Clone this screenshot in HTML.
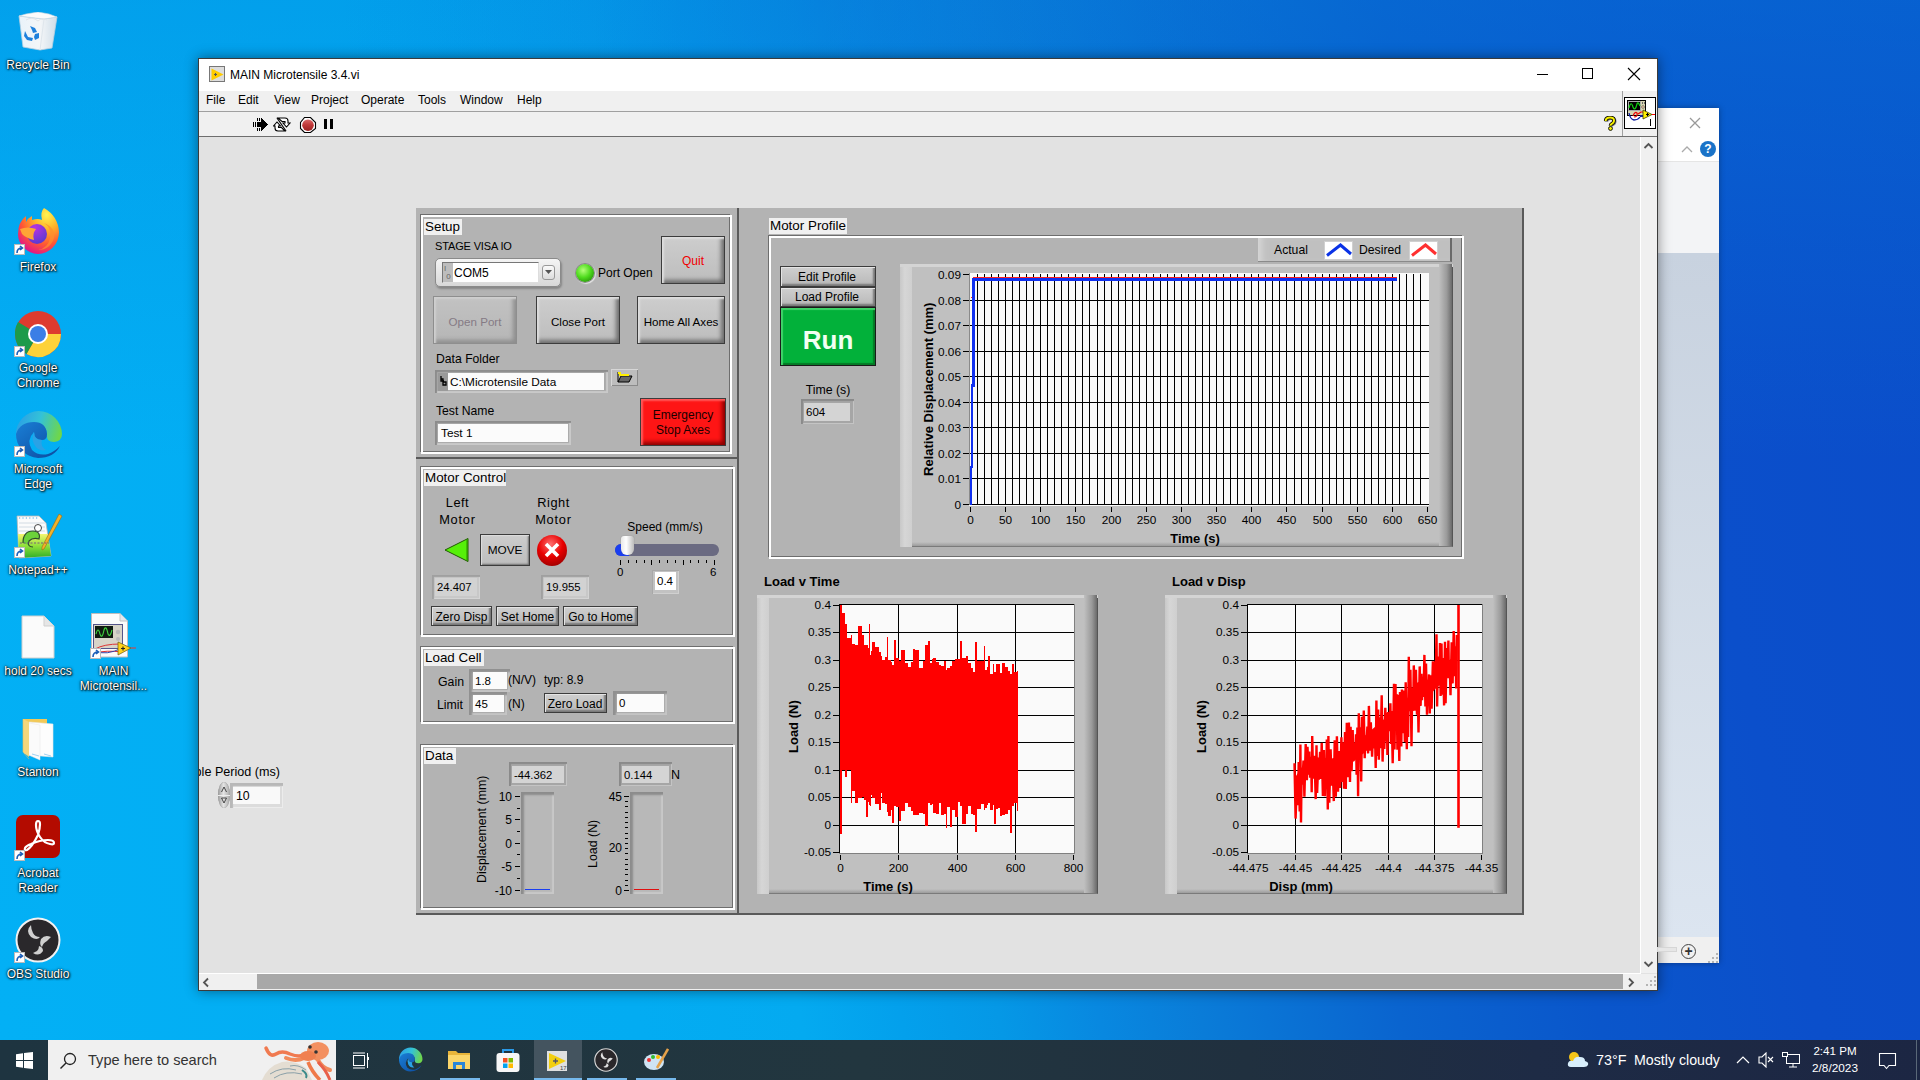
<!DOCTYPE html>
<html><head><meta charset="utf-8"><style>
*{margin:0;padding:0;box-sizing:border-box}
html,body{width:1920px;height:1080px;overflow:hidden}
body{position:relative;font-family:"Liberation Sans",sans-serif;background:#0a48c4}
.a{position:absolute}
.t{white-space:nowrap;line-height:1}
.di{position:absolute;color:#fff;font-size:12px;text-align:center;text-shadow:0 0 1px #000,1px 1px 2px #000,0 0 3px rgba(0,0,0,.8);line-height:15px;width:84px}
.btn{position:absolute;border:1px solid #3c3c3c;background:linear-gradient(#cdcdcd,#bdbdbd);box-shadow:inset 3px 3px 2px -1px #dedede,inset -4px -4px 4px -1px #6c6c6c}
.sbtn{position:absolute;border:1px solid #3c3c3c;background:linear-gradient(#cfcfcf,#b8b8b8);box-shadow:inset 1px 1px 0 #e4e4e4,inset -2px -2px 2px #777}
.fld{position:absolute;background:#a9a9a9;box-shadow:inset 2px 2px 1px #8c8c8c,inset -2px -2px 1px #c9c9c9}
.ind{position:absolute;background:#d6d6d6}
.lbl{position:absolute;background:#f0f0f0;font-size:13.4px;line-height:16px;color:#000;padding-left:1px;white-space:nowrap}
.etch{position:absolute;border:1px solid #6e6e6e;box-shadow:1px 1px 0 1px #fff, inset 1px 1px 0 1px #fff}
</style></head><body>
<div class="a" style="left:0;top:0;width:1920px;height:1040px;background:radial-gradient(ellipse 480px 330px at 820px 0px,rgba(10,108,214,.35),rgba(10,108,214,0) 100%),linear-gradient(180deg,rgba(0,135,222,.35) 0px,rgba(0,135,222,0) 460px),linear-gradient(78deg,#03b0f5 0%,#03acf2 30%,#04aaf0 37.6%,#03a0ec 42.3%,#0598e6 46.9%,#0888e0 51.6%,#0a7cd8 56.3%,#0a64cf 65.6%,#0a56cb 74.9%,#0b4fcb 85%,#0b4cc9 100%)"></div>
<svg class="a" style="left:16px;top:12px" width="44" height="40"><defs><linearGradient id="rb" x1="0" x2="1"><stop offset="0" stop-color="#e9f3fa"/><stop offset="0.55" stop-color="#f4f6f8"/><stop offset="1" stop-color="#cfdde8"/></linearGradient></defs><path d="M3 4 L28 7 L41 5 L36 36 L24 38 L7 35 Z" fill="url(#rb)" stroke="#b9cfdf" stroke-width="0.8"/><path d="M3 4 L28 7 L41 5 L33 2 L22 0 L10 2Z" fill="#fbfbfb" stroke="#c8d6e0" stroke-width="0.6"/><path d="M28 7 L24 38" stroke="#dfe6ec" stroke-width="1"/><path d="M10 8 Q16 4 22 9 Q26 5 31 8" stroke="#e0e4e8" fill="none"/><g transform="translate(15,21)" fill="#1e80dc"><path d="M-1 -7 L4 -5 L6 -1 L2 0 L1 -3 Z"/><path d="M-6 -2 L-3 4 L2 5 L1 8 L-4 7 L-7 3Z"/><path d="M4 1 L8 0 L8 5 L4 7 L3 4Z"/></g></svg>
<div class="di" style="left:-4px;top:58px">Recycle Bin</div>
<svg class="a" style="left:14px;top:208px" width="48" height="48"><defs><radialGradient id="ff" cx="0.7" cy="0.15" r="0.9"><stop offset="0" stop-color="#fff44f"/><stop offset="0.35" stop-color="#ffb32a"/><stop offset="0.7" stop-color="#ff5a32"/><stop offset="1" stop-color="#e31587"/></radialGradient><radialGradient id="fp" cx="0.4" cy="0.2" r="0.8"><stop offset="0" stop-color="#b833e1"/><stop offset="1" stop-color="#5b3ad0"/></radialGradient></defs><path d="M24 46 A21 20 0 0 1 4 26 Q4 14 12 8 L12 14 Q14 10 18 8 L18 12 Q24 10 28 12 Q26 4 30 0 Q44 8 45 24 A21 22 0 0 1 24 46Z" fill="url(#ff)"/><circle cx="23" cy="26" r="10" fill="url(#fp)"/><path d="M6 21 Q14 18 22 21 Q18 26 20 32 Q12 30 8 26Z" fill="#ffa436"/><path d="M30 15 Q38 20 36 30 Q34 40 24 42 Q36 42 40 30 Q42 20 30 15Z" fill="#ff8f2e" opacity="0.7"/></svg>
<div class="a" style="left:14px;top:244px;width:11px;height:11px;background:#fff;border:1px solid #bbb"><svg width="9" height="9" style="position:absolute;left:0;top:0"><path d="M2 8 Q2 3 7 3 M5 1 L7.5 3 L5 5" stroke="#1c5fb8" stroke-width="1.6" fill="none"/></svg></div>
<div class="di" style="left:-4px;top:260px">Firefox</div>
<svg class="a" style="left:14px;top:310px" width="48" height="48"><circle cx="24" cy="24" r="23" fill="#de3b2f"/><path d="M24 24 L47 24 A23 23 0 0 1 12.5 44Z" fill="#fdd23a"/><path d="M24 24 L12.5 44 A23 23 0 0 1 1 24 L1 22 A23 23 0 0 1 4 12Z" fill="#1d9a4a"/><circle cx="24" cy="24" r="10" fill="#fff"/><circle cx="24" cy="24" r="8" fill="#3b7ee6"/></svg>
<div class="a" style="left:14px;top:346px;width:11px;height:11px;background:#fff;border:1px solid #bbb"><svg width="9" height="9" style="position:absolute;left:0;top:0"><path d="M2 8 Q2 3 7 3 M5 1 L7.5 3 L5 5" stroke="#1c5fb8" stroke-width="1.6" fill="none"/></svg></div>
<div class="di" style="left:-4px;top:361px">Google</div>
<div class="di" style="left:-4px;top:376px">Chrome</div>
<svg class="a" style="left:14px;top:410px" width="49" height="49"><defs><linearGradient id="eg" x1="0" y1="0.3" x2="1" y2="0.5"><stop offset="0" stop-color="#2b9ee6"/><stop offset="0.5" stop-color="#33c2d8"/><stop offset="1" stop-color="#6fd64a"/></linearGradient><linearGradient id="ed" x1="0" y1="0" x2="1" y2="1"><stop offset="0" stop-color="#1a7fd6"/><stop offset="1" stop-color="#0c4a9e"/></linearGradient></defs><path d="M24.5 1 A23.5 23.5 0 0 1 48 24 Q48 31 40 32 Q32 32 33 25 Q33 15 24 14 Q10 14 4 26 Q2 30 2 24 A23 23 0 0 1 24.5 1Z" fill="url(#eg)"/><path d="M2 24 Q6 12 20 12 Q32 12 33 24 Q33 30 28 30 Q20 30 20 22 Q12 30 18 40 Q24 46 34 44 Q40 42 46 36 Q40 48 24 48 A23.5 23.5 0 0 1 2 24Z" fill="url(#ed)"/><path d="M20 22 Q20 30 28 30 Q26 36 32 40 Q24 42 20 34 Q17 28 20 22Z" fill="#2aa2e6"/></svg>
<div class="a" style="left:14px;top:446px;width:11px;height:11px;background:#fff;border:1px solid #bbb"><svg width="9" height="9" style="position:absolute;left:0;top:0"><path d="M2 8 Q2 3 7 3 M5 1 L7.5 3 L5 5" stroke="#1c5fb8" stroke-width="1.6" fill="none"/></svg></div>
<div class="di" style="left:-4px;top:462px">Microsoft</div>
<div class="di" style="left:-4px;top:477px">Edge</div>
<svg class="a" style="left:15px;top:513px" width="48" height="46"><defs><linearGradient id="np" x1="0" y1="0" x2="0" y2="1"><stop offset="0" stop-color="#f6f570"/><stop offset="0.5" stop-color="#8fe03a"/><stop offset="1" stop-color="#2fae2a"/></linearGradient></defs><path d="M2 3 L24 3 L31 10 L36 43 L4 45Z" fill="#fbfbfb" stroke="#b8b8b8" stroke-width="0.8"/><path d="M4 5H23" stroke="#4aa8e8" stroke-dasharray="1.2 2.2" stroke-width="1.2"/><path d="M4 10H30M4 14H30M4 18H30" stroke="#c9d4de" stroke-width="0.8"/><path d="M3 21 L33 21 L36 43 L4 45Z" fill="url(#np)"/><path d="M8 30 Q8 18 18 18 Q26 18 24 26 Q18 24 14 28 Q12 34 18 34" stroke="#2d4d2d" stroke-width="1.2" fill="#6cd23a"/><circle cx="23" cy="15" r="3.5" fill="#fff" stroke="#333" stroke-width="0.9"/><path d="M44 1 L47 3 L29 36 L27 37 L27 34Z" fill="#f2b22a" stroke="#9a6a10" stroke-width="0.6"/><path d="M5 30H34" stroke="#6a3a8a" stroke-width="0.8" stroke-dasharray="2 1.5"/></svg>
<div class="a" style="left:14px;top:547px;width:11px;height:11px;background:#fff;border:1px solid #bbb"><svg width="9" height="9" style="position:absolute;left:0;top:0"><path d="M2 8 Q2 3 7 3 M5 1 L7.5 3 L5 5" stroke="#1c5fb8" stroke-width="1.6" fill="none"/></svg></div>
<div class="di" style="left:-4px;top:563px">Notepad++</div>
<svg class="a" style="left:20px;top:614px" width="36" height="46"><path d="M2 2 L24 2 L34 12 L34 44 L2 44Z" fill="#fbfbfb" stroke="#cfcfcf"/><path d="M24 2 L24 12 L34 12" fill="#e6e6e6" stroke="#cfcfcf"/></svg>
<div class="di" style="left:-4px;top:664px">hold 20 secs</div>
<svg class="a" style="left:90px;top:612px" width="46" height="46"><path d="M1.5 1.5 L30 1.5 L37.5 9 L37.5 45 L1.5 45Z" fill="#fbfbfb" stroke="#bdbdbd"/><path d="M30 1.5V9H37.5" fill="#e4e8ee" stroke="#c4c4c4"/><rect x="3.5" y="12.5" width="29" height="24" fill="#d8d4c8" stroke="#55558a"/><rect x="5" y="14" width="18" height="12" fill="#101a10"/><path d="M6 22 Q8 14 10 22 Q12 28 14 18 Q16 12 18 22 Q20 26 22 18" stroke="#3fd23f" fill="none" stroke-width="1.1"/><circle cx="28" cy="20" r="2.2" fill="#bbb"/><circle cx="28" cy="27" r="2" fill="#bbb"/><path d="M5 37 Q14 32 30 32 M5 41 Q16 38 32 40" stroke="#d33" fill="none" stroke-width="1"/><path d="M5 39 Q16 44 32 36" stroke="#3344aa" fill="none" stroke-width="1"/><path d="M28 30 L41 36 L28 43Z" fill="#ffd21a" stroke="#6a5a10" stroke-width="0.7"/><path d="M31 36.5H35M33 34.5V38.5" stroke="#222" stroke-width="1.1"/><path d="M41 36H46" stroke="#e33" stroke-width="1"/></svg>
<div class="a" style="left:90px;top:648px;width:11px;height:11px;background:#fff;border:1px solid #bbb"><svg width="9" height="9" style="position:absolute;left:0;top:0"><path d="M2 8 Q2 3 7 3 M5 1 L7.5 3 L5 5" stroke="#1c5fb8" stroke-width="1.6" fill="none"/></svg></div>
<div class="di" style="left:71.5px;top:664px">MAIN</div>
<div class="di" style="left:71.5px;top:679px">Microtensil...</div>
<svg class="a" style="left:20px;top:716px" width="38" height="46"><path d="M3 3 L27 3 L27 30 L3 30Z" fill="#f2c958"/><path d="M9 6 L33 8 L33 41 L9 39Z" fill="#fdfdfd" stroke="#e8e8e8" stroke-width="0.6"/><path d="M4 6 L20 9 L20 44 L4 37Z" fill="#fbfbfb" stroke="#e6e6e6" stroke-width="0.5"/><path d="M3 3 L9 6 L9 41 L3 36Z" fill="#f6d77c"/><path d="M3 3 L3 36 L9 43" stroke="#e6c060" fill="none" stroke-width="0.6"/><path d="M12 38 L19 40 M24 38 L31 40" stroke="#8ac6ee" stroke-width="0.8"/></svg>
<div class="di" style="left:-4px;top:765px">Stanton</div>
<svg class="a" style="left:16px;top:815px" width="44" height="44"><rect x="0" y="0" width="44" height="43" rx="7" fill="#b30b00"/><path d="M9 33 Q8 36 11 35 Q16 32 22 20 Q24 14 24 9 Q24 6 22 6 Q20 6 20 10 Q20 16 24 22 Q28 28 34 29 Q38 30 38 28 Q38 25 32 25 Q24 25 15 29 Q10 31 9 33Z" fill="none" stroke="#fff" stroke-width="2.2"/></svg>
<div class="a" style="left:14px;top:850px;width:11px;height:11px;background:#fff;border:1px solid #bbb"><svg width="9" height="9" style="position:absolute;left:0;top:0"><path d="M2 8 Q2 3 7 3 M5 1 L7.5 3 L5 5" stroke="#1c5fb8" stroke-width="1.6" fill="none"/></svg></div>
<div class="di" style="left:-4px;top:866px">Acrobat</div>
<div class="di" style="left:-4px;top:881px">Reader</div>
<svg class="a" style="left:15px;top:917px" width="46" height="46"><circle cx="23" cy="23" r="21.5" fill="#2a282b" stroke="#f2f2f2" stroke-width="2"/><g fill="#d0d0d0"><path d="M16 8 Q10 14 16 20 Q22 24 25 20 Q20 20 18 16 Q16 12 16 8Z"/><path d="M36 20 Q30 17 26 22 Q24 28 27 30 Q28 26 32 24 Q34 22 36 20Z"/><path d="M18 36 Q24 40 28 34 Q28 30 24 29 Q24 32 22 34 Q20 35 18 36Z"/></g></svg>
<div class="a" style="left:14px;top:952px;width:11px;height:11px;background:#fff;border:1px solid #bbb"><svg width="9" height="9" style="position:absolute;left:0;top:0"><path d="M2 8 Q2 3 7 3 M5 1 L7.5 3 L5 5" stroke="#1c5fb8" stroke-width="1.6" fill="none"/></svg></div>
<div class="di" style="left:-4px;top:967px">OBS Studio</div>
<div class="a" style="left:1657px;top:108px;width:62px;height:855px;background:#fff;box-shadow:0 0 6px rgba(0,0,0,.35)"></div>
<div class="a" style="left:1657px;top:161px;width:62px;height:1px;background:#e5e5e5"></div>
<div class="a" style="left:1657px;top:162px;width:62px;height:91px;background:#f3f4f6"></div>
<div class="a" style="left:1657px;top:253px;width:62px;height:684px;background:linear-gradient(#c8d2df,#dce5f0)"></div>
<div class="a" style="left:1657px;top:937px;width:62px;height:26px;background:#f0f0f0"></div>
<svg class="a" style="left:1688px;top:116px" width="14" height="14"><path d="M2 2L12 12M12 2L2 12" stroke="#999" stroke-width="1.3"/></svg>
<svg class="a" style="left:1680px;top:144px" width="14" height="10"><path d="M2 8L7 3L12 8" stroke="#aaa" stroke-width="1.3" fill="none"/></svg>
<div class="a" style="left:1700px;top:141px;width:16px;height:16px;border-radius:50%;background:#1a73c8;color:#fff;font-size:12px;font-weight:700;text-align:center;line-height:16px">?</div>
<div class="a" style="left:1681px;top:944px;width:15px;height:15px;border-radius:50%;border:1px solid #444;color:#333;font-size:14px;font-weight:700;text-align:center;line-height:13px">+</div>
<div class="a" style="left:198px;top:58px;width:1460px;height:933px;background:#e2e2e2;border:1px solid #3b3b3b;box-shadow:0 0 12px rgba(0,0,0,.45)"></div>
<div class="a" style="left:199px;top:59px;width:1458px;height:32px;background:#fff"></div>
<div class="a" style="left:209px;top:66px;width:16px;height:16px;border:1px solid #777;background:#ddd"></div>
<svg class="a" style="left:210px;top:67px" width="15" height="15"><path d="M1.5 1.5L13.5 7.5L1.5 13.5Z" fill="#ffcc00"/><path d="M4 7.5H7M5.5 6V9" stroke="#555" stroke-width="1"/></svg>
<div class="a t" style="left:230px;top:69px;font-size:12px;color:#000;font-weight:400;">MAIN Microtensile 3.4.vi</div>
<div class="a" style="left:1537px;top:74px;width:11px;height:1px;background:#000"></div>
<div class="a" style="left:1582px;top:68px;width:11px;height:11px;border:1px solid #000"></div>
<svg class="a" style="left:1627px;top:67px" width="14" height="14"><path d="M1 1L13 13M13 1L1 13" stroke="#000" stroke-width="1.1"/></svg>
<div class="a" style="left:199px;top:91px;width:1458px;height:20px;background:#f0f0f0"></div>
<div class="a" style="left:199px;top:111px;width:1458px;height:1px;background:#a0a0a0"></div>
<div class="a t" style="left:206px;top:94px;font-size:12px;color:#000;font-weight:400;">File</div>
<div class="a t" style="left:238px;top:94px;font-size:12px;color:#000;font-weight:400;">Edit</div>
<div class="a t" style="left:274px;top:94px;font-size:12px;color:#000;font-weight:400;">View</div>
<div class="a t" style="left:311px;top:94px;font-size:12px;color:#000;font-weight:400;">Project</div>
<div class="a t" style="left:361px;top:94px;font-size:12px;color:#000;font-weight:400;">Operate</div>
<div class="a t" style="left:418px;top:94px;font-size:12px;color:#000;font-weight:400;">Tools</div>
<div class="a t" style="left:460px;top:94px;font-size:12px;color:#000;font-weight:400;">Window</div>
<div class="a t" style="left:517px;top:94px;font-size:12px;color:#000;font-weight:400;">Help</div>
<div class="a" style="left:199px;top:112px;width:1423px;height:24px;background:#f0f0f0"></div>
<div class="a" style="left:199px;top:136px;width:1442px;height:1px;background:#6e6e6e"></div>
<div class="a" style="left:1622px;top:91px;width:1px;height:46px;background:#a0a0a0"></div>
<div class="a" style="left:1623px;top:91px;width:34px;height:46px;background:#f0f0f0"></div>
<div class="a" style="left:1622px;top:136px;width:35px;height:1px;background:#6e6e6e"></div>
<div class="a" style="left:1624px;top:97px;width:32px;height:32px;background:#fff;border:1px solid #000"></div>
<svg class="a" style="left:1624px;top:97px" width="33" height="33" shape-rendering="crispEdges"><rect x="3" y="3" width="19" height="16" fill="#000"/><rect x="4" y="4" width="17" height="14" fill="#d6d4b0"/><rect x="4" y="4" width="13" height="10" fill="#aaa"/><rect x="5" y="5" width="11" height="8" fill="#000"/><path d="M5 11 Q7 3 9 10 Q11 15 13 7 Q14 4 16 9" stroke="#10d010" stroke-width="1.2" fill="none" shape-rendering="auto"/><circle cx="19" cy="10" r="1.4" fill="#f0c8a0" stroke="#555" stroke-width="0.6" shape-rendering="auto"/><rect x="18" y="5" width="1" height="2" fill="#666"/><rect x="20" y="5" width="1" height="2" fill="#666"/><path d="M5 16 Q6 22 10 23 Q14 23 16 20" stroke="#1020a0" stroke-width="1.3" fill="none" shape-rendering="auto"/><path d="M9 19 Q11 14 13 16 Q14 20 10 20 M14 17 L17 15 L21 15" stroke="#f00000" stroke-width="1.2" fill="none" shape-rendering="auto"/><path d="M16 19H20" stroke="#1020a0" stroke-width="1.3"/><path d="M19 13L28 17.5L19 22Z" fill="#ffef00" stroke="#404000" stroke-width="0.8" shape-rendering="auto"/><path d="M22 17.5H25M23.5 16V19" stroke="#000" stroke-width="1.2"/><path d="M28 17.5H31" stroke="#f00"/><path d="M25.5 23.5 L26.5 22.5 V29" stroke="#000" stroke-width="1.3" fill="none"/></svg>
<svg class="a" style="left:250px;top:115px" width="20" height="18" shape-rendering="crispEdges"><path d="M7 7H11V3L18 9.5L11 16V12H7Z" fill="#000"/><rect x="7" y="3" width="1" height="3" fill="#000"/><rect x="9" y="3" width="1" height="3" fill="#000"/><rect x="7" y="13" width="1" height="3" fill="#000"/><rect x="9" y="13" width="1" height="3" fill="#000"/><rect x="3" y="7" width="1" height="5" fill="#000"/><rect x="5" y="7" width="1" height="5" fill="#000"/></svg>
<svg class="a" style="left:273px;top:117px" width="18" height="15"><path d="M5 1 H12 Q15 1 15 4 V6 H17 L13.5 10 L10 6 H12 V4.5 H9Z" fill="#fff" stroke="#000" stroke-width="1.1" stroke-linejoin="miter"/><path d="M12 14 H5 Q2 14 2 11 V9 H0.5 L4 5 L7.5 9 H5.5 V10.5 H8.5Z" fill="#fff" stroke="#000" stroke-width="1.1"/><path d="M4 1 L13 14" stroke="#000" stroke-width="1.2"/></svg>
<svg class="a" style="left:299px;top:116px" width="18" height="18"><path d="M5.5 1.5H11.5L16.5 6.5V12.5L11.5 16.5H5.5L1.5 12.5V6.5Z" fill="#fff" stroke="#000" stroke-width="1.1"/><defs><linearGradient id="ab" x1="0" y1="0" x2="0" y2="1"><stop offset="0" stop-color="#d86a6a"/><stop offset="0.45" stop-color="#c23a3a"/><stop offset="1" stop-color="#9a2222"/></linearGradient></defs><circle cx="9" cy="9.2" r="5.8" fill="url(#ab)"/></svg>
<div class="a" style="left:324px;top:119px;width:3px;height:10px;background:#000"></div>
<div class="a" style="left:330px;top:119px;width:3px;height:10px;background:#000"></div>
<svg class="a" style="left:1603px;top:116px" width="15" height="17" viewBox="0 0 17 19"><path d="M3 5.5 Q3 1.5 8 1.5 Q12.5 1.5 12.5 5 Q12.5 7.5 9.5 9 Q8.5 9.6 8.5 11" stroke="#000" stroke-width="4" fill="none" transform="translate(0.8,0.8)" opacity="0.5"/><path d="M3 5.5 Q3 1.5 8 1.5 Q12.5 1.5 12.5 5 Q12.5 7.5 9.5 9 Q8.5 9.6 8.5 11" stroke="#000" stroke-width="4" fill="none"/><path d="M3 5.5 Q3 1.5 8 1.5 Q12.5 1.5 12.5 5 Q12.5 7.5 9.5 9 Q8.5 9.6 8.5 11" stroke="#f6f000" stroke-width="2.2" fill="none"/><circle cx="8.5" cy="14" r="2.2" fill="#f6f000" stroke="#000" stroke-width="1"/></svg>
<div class="a" style="left:1641px;top:137px;width:16px;height:836px;background:#f0f0f0"></div>
<div class="a" style="left:1640px;top:137px;width:1px;height:837px;background:#fff"></div>
<svg class="a" style="left:1643px;top:141px" width="11" height="9"><path d="M1.5 7L5.5 3L9.5 7" stroke="#555" stroke-width="1.8" fill="none"/></svg>
<svg class="a" style="left:1643px;top:960px" width="11" height="9"><path d="M1.5 2L5.5 6L9.5 2" stroke="#555" stroke-width="1.8" fill="none"/></svg>
<div class="a" style="left:199px;top:973px;width:1442px;height:1px;background:#fff"></div>
<div class="a" style="left:199px;top:974px;width:1442px;height:16px;background:#f0f0f0"></div>
<div class="a" style="left:257px;top:974px;width:1366px;height:15px;background:#a8a8a8"></div>
<svg class="a" style="left:201px;top:977px" width="9" height="11"><path d="M7 1.5L3 5.5L7 9.5" stroke="#555" stroke-width="1.8" fill="none"/></svg>
<svg class="a" style="left:1627px;top:977px" width="9" height="11"><path d="M2 1.5L6 5.5L2 9.5" stroke="#555" stroke-width="1.8" fill="none"/></svg>
<div class="a" style="left:1641px;top:974px;width:16px;height:16px;background:#f0f0f0"></div>
<div class="a" style="left:1654px;top:976px;width:2px;height:2px;background:#b4b4b4"></div>
<div class="a" style="left:1650px;top:980px;width:2px;height:2px;background:#b4b4b4"></div>
<div class="a" style="left:1654px;top:980px;width:2px;height:2px;background:#b4b4b4"></div>
<div class="a" style="left:1646px;top:984px;width:2px;height:2px;background:#b4b4b4"></div>
<div class="a" style="left:1650px;top:984px;width:2px;height:2px;background:#b4b4b4"></div>
<div class="a" style="left:1654px;top:984px;width:2px;height:2px;background:#b4b4b4"></div>
<div class="a" style="left:1716px;top:953px;width:2px;height:2px;background:#b4b4b4"></div>
<div class="a" style="left:1712px;top:957px;width:2px;height:2px;background:#b4b4b4"></div>
<div class="a" style="left:1716px;top:957px;width:2px;height:2px;background:#b4b4b4"></div>
<div class="a" style="left:1708px;top:961px;width:2px;height:2px;background:#b4b4b4"></div>
<div class="a" style="left:1712px;top:961px;width:2px;height:2px;background:#b4b4b4"></div>
<div class="a" style="left:1716px;top:961px;width:2px;height:2px;background:#b4b4b4"></div>
<div class="a" style="left:1657px;top:947px;width:20px;height:5px;background:#e6e6e6;border:1px solid #d6d6d6"></div>
<div class="a" style="left:199px;top:760px;width:100px;height:22px;overflow:hidden"><div class="a t" style="left:-30.3px;top:6.3px;font-size:12.6px;color:#000">Sample Period (ms)</div></div>
<div class="a" style="left:218px;top:782px;width:12px;height:26px;border-radius:6px/13px;background:linear-gradient(90deg,#9c9c9c,#e4e4e4 45%,#a8a8a8);box-shadow:inset 0 0 1px #777"></div>
<div class="a" style="left:218px;top:795px;width:12px;height:1px;background:#ededed"></div>
<svg class="a" style="left:220px;top:785px" width="8" height="20"><path d="M1.5 7L4 2L6.5 7M1.5 13L4 18L6.5 13Z" stroke="#333" stroke-width="0.9" fill="none"/></svg>
<div class="a" style="left:230px;top:783px;width:53px;height:25px;background:#dcdcdc;box-shadow:inset 3px 3px 1px #b8b8b8,inset -1px -1px 0 #ececec"></div>
<div class="a" style="left:233px;top:787px;width:47px;height:17px;background:#f9f9f9"></div>
<div class="a t" style="left:236px;top:789.5px;font-size:12.3px;color:#000;font-weight:400;">10</div>
<div class="a" style="left:416px;top:208px;width:323px;height:251px;background:#b3b3b3;border-right:2px solid #5a5a5a;border-bottom:2px solid #5a5a5a"></div>
<div class="a" style="left:416px;top:459px;width:323px;height:456px;background:#b3b3b3;border-right:2px solid #5a5a5a;border-bottom:2px solid #5a5a5a"></div>
<div class="a" style="left:738px;top:208px;width:786px;height:707px;background:#b3b3b3;border-right:2px solid #5a5a5a;border-bottom:2px solid #5a5a5a"></div>
<div class="a" style="left:738px;top:208px;width:1px;height:707px;background:#5a5a5a"></div>
<div class="a" style="left:420px;top:214px;width:310px;height:238px;border-left:1px solid #6e6e6e;border-top:1px solid #6e6e6e"></div>
<div class="a" style="left:421px;top:215px;width:311px;height:239px;border-left:2px solid #fff;border-top:2px solid #fff;border-right:2px solid #fff;border-bottom:2px solid #fff"></div>
<div class="a" style="left:423px;top:217px;width:307px;height:235px;border-right:1px solid #6e6e6e;border-bottom:1px solid #6e6e6e"></div>
<div class="a" style="left:420px;top:466px;width:313px;height:169px;border-left:1px solid #6e6e6e;border-top:1px solid #6e6e6e"></div>
<div class="a" style="left:421px;top:467px;width:314px;height:170px;border-left:2px solid #fff;border-top:2px solid #fff;border-right:2px solid #fff;border-bottom:2px solid #fff"></div>
<div class="a" style="left:423px;top:469px;width:310px;height:166px;border-right:1px solid #6e6e6e;border-bottom:1px solid #6e6e6e"></div>
<div class="a" style="left:420px;top:646px;width:313px;height:76px;border-left:1px solid #6e6e6e;border-top:1px solid #6e6e6e"></div>
<div class="a" style="left:421px;top:647px;width:314px;height:77px;border-left:2px solid #fff;border-top:2px solid #fff;border-right:2px solid #fff;border-bottom:2px solid #fff"></div>
<div class="a" style="left:423px;top:649px;width:310px;height:73px;border-right:1px solid #6e6e6e;border-bottom:1px solid #6e6e6e"></div>
<div class="a" style="left:420px;top:744px;width:313px;height:164px;border-left:1px solid #6e6e6e;border-top:1px solid #6e6e6e"></div>
<div class="a" style="left:421px;top:745px;width:314px;height:165px;border-left:2px solid #fff;border-top:2px solid #fff;border-right:2px solid #fff;border-bottom:2px solid #fff"></div>
<div class="a" style="left:423px;top:747px;width:310px;height:161px;border-right:1px solid #6e6e6e;border-bottom:1px solid #6e6e6e"></div>
<div class="a" style="left:768px;top:235px;width:694px;height:322px;border-left:1px solid #6e6e6e;border-top:1px solid #6e6e6e"></div>
<div class="a" style="left:769px;top:236px;width:695px;height:323px;border-left:2px solid #fff;border-top:2px solid #fff;border-right:2px solid #fff;border-bottom:2px solid #fff"></div>
<div class="a" style="left:771px;top:238px;width:691px;height:319px;border-right:1px solid #6e6e6e;border-bottom:1px solid #6e6e6e"></div>
<div class="lbl" style="left:424px;top:219px;width:38px;height:16px">Setup</div>
<div class="lbl" style="left:424px;top:470px;width:82px;height:16px">Motor Control</div>
<div class="lbl" style="left:424px;top:650px;width:60px;height:16px">Load Cell</div>
<div class="lbl" style="left:424px;top:748px;width:32px;height:16px">Data</div>
<div class="lbl" style="left:769px;top:218px;width:78px;height:16px">Motor Profile</div>
<div class="a t" style="left:435px;top:241px;font-size:11px;color:#000;font-weight:400;letter-spacing:-0.15px">STAGE VISA IO</div>
<div class="a" style="left:435px;top:258px;width:126px;height:29px;border-radius:5px;border:1px solid #8a8a8a;background:linear-gradient(#f4f4f4,#d8d8d8);box-shadow:1px 2px 2px rgba(0,0,0,.25)"></div>
<div class="a" style="left:442px;top:262px;width:97px;height:21px;background:#fff;border:1px solid #777;border-bottom-color:#ddd;border-right-color:#ddd"></div>
<div class="a" style="left:443px;top:263px;width:10px;height:19px;background:#bdbdbd"></div>
<div class="a t" style="left:444px;top:265px;font-size:8px;color:#666;line-height:8px">I<br>&nbsp;0</div>
<div class="a t" style="left:454px;top:267px;font-size:12px;color:#000;font-weight:400;">COM5</div>
<div class="a" style="left:542px;top:265px;width:13px;height:15px;border:1px solid #999;border-radius:3px;background:linear-gradient(#fafafa,#dcdcdc)"></div>
<svg class="a" style="left:545px;top:270px" width="7" height="5"><path d="M0 0H7L3.5 4Z" fill="#555"/></svg>
<div class="a" style="left:576px;top:264px;width:18px;height:18px;border-radius:50%;background:radial-gradient(circle at 40% 35%,#b4ff7a,#4fdc1e 45%,#2a9a0a 80%);box-shadow:0 0 0 1px #8a8a8a,1px 1px 1px 1px #e6e6e6"></div>
<div class="a t" style="left:598px;top:267px;font-size:12px;color:#000;font-weight:400;">Port Open</div>
<div class="btn" style="left:661px;top:236px;width:64px;height:48px"></div>
<div class="a t" style="left:543px;width:300px;text-align:center;top:255px;font-size:12px;color:#f00000;font-weight:400;">Quit</div>
<div class="btn" style="left:433px;top:296px;width:84px;height:48px;border-color:#8e8e8e;box-shadow:inset 3px 3px 2px -1px #cfcfcf,inset -4px -4px 4px -1px #8e8e8e;background:linear-gradient(#c2c2c2,#b6b6b6)"></div>
<div class="a t" style="left:325px;width:300px;text-align:center;top:316px;font-size:11.6px;color:#857a85;font-weight:400;">Open Port</div>
<div class="btn" style="left:536px;top:296px;width:84px;height:48px"></div>
<div class="a t" style="left:428px;width:300px;text-align:center;top:316px;font-size:11.6px;color:#000;font-weight:400;">Close Port</div>
<div class="btn" style="left:637px;top:296px;width:88px;height:48px"></div>
<div class="a t" style="left:531px;width:300px;text-align:center;top:316px;font-size:11.6px;color:#000;font-weight:400;">Home All Axes</div>
<div class="a t" style="left:436px;top:353px;font-size:12.2px;color:#000;font-weight:400;">Data Folder</div>
<div class="fld" style="left:435px;top:370px;width:173px;height:23px"></div>
<div class="a" style="left:438px;top:373px;width:10px;height:18px;background:#9a9a9a"></div>
<svg class="a" style="left:440px;top:376px" width="7" height="11"><path d="M1 0V5H4M1 3H3V9H6V6H3" stroke="#000" stroke-width="1.3" fill="none"/></svg>
<div class="a" style="left:448px;top:373px;width:156px;height:17px;background:#fbfbfb"></div>
<div class="a t" style="left:450px;top:377px;font-size:11.8px;color:#000;font-weight:400;">C:\Microtensile Data</div>
<div class="a" style="left:611px;top:369px;width:27px;height:17px;background:#bdbdbd;box-shadow:inset 1px 1px 0 #d6d6d6,inset -1px -1px 0 #8a8a8a"></div>
<svg class="a" style="left:617px;top:371px" width="16" height="12"><path d="M1 1V11H12L15 5H4L1 11" fill="#666" stroke="#000"/><path d="M1 2H3V4H12" stroke="#ffef00" stroke-width="2" fill="none"/></svg>
<div class="a t" style="left:436px;top:405px;font-size:12.2px;color:#000;font-weight:400;">Test Name</div>
<div class="fld" style="left:435px;top:421px;width:136px;height:24px"></div>
<div class="a" style="left:438px;top:424px;width:130px;height:18px;background:#fbfbfb"></div>
<div class="a t" style="left:441px;top:428px;font-size:11.8px;color:#000;font-weight:400;">Test 1</div>
<div class="btn" style="left:640px;top:398px;width:86px;height:48px;background:#fe1515;box-shadow:inset 3px 3px 2px -1px #ff5a5a,inset -4px -4px 4px -1px #8a0000"></div>
<div class="a t" style="left:533px;width:300px;text-align:center;top:409px;font-size:12px;color:#1a0000;font-weight:400;">Emergency</div>
<div class="a t" style="left:533px;width:300px;text-align:center;top:424px;font-size:12px;color:#1a0000;font-weight:400;">Stop Axes</div>
<div class="a t" style="left:307.5px;width:300px;text-align:center;top:497px;font-size:12.8px;color:#000;font-weight:400;letter-spacing:0.5px">Left</div>
<div class="a t" style="left:307.5px;width:300px;text-align:center;top:514px;font-size:12.8px;color:#000;font-weight:400;letter-spacing:0.8px">Motor</div>
<div class="a t" style="left:403.5px;width:300px;text-align:center;top:497px;font-size:12.8px;color:#000;font-weight:400;letter-spacing:0.5px">Right</div>
<div class="a t" style="left:403.5px;width:300px;text-align:center;top:514px;font-size:12.8px;color:#000;font-weight:400;letter-spacing:0.8px">Motor</div>
<svg class="a" style="left:443px;top:537px" width="27" height="26"><path d="M25 1.5V24.5L2 13Z" fill="#56f00a" stroke="#1f5a00" stroke-width="1"/><path d="M24 3V23" stroke="#2a8a00"/></svg>
<div class="btn" style="left:480px;top:534px;width:50px;height:32px;box-shadow:inset 2px 2px 1px -1px #dedede,inset -2px -2px 2px -1px #6c6c6c"></div>
<div class="a t" style="left:355px;width:300px;text-align:center;top:545px;font-size:11.8px;color:#000;font-weight:400;">MOVE</div>
<div class="a" style="left:537px;top:535px;width:30px;height:31px;border-radius:50%;background:radial-gradient(circle at 45% 30%,#ff7070,#e80000 45%,#900000 90%)"></div>
<svg class="a" style="left:542px;top:540px" width="20" height="20"><path d="M4 4L16 16M16 4L4 16" stroke="#fff" stroke-width="3.6"/></svg>
<div class="a t" style="left:515px;width:300px;text-align:center;top:521px;font-size:12px;color:#000;font-weight:400;">Speed (mm/s)</div>
<div class="a" style="left:615px;top:544px;width:104px;height:12px;border-radius:6px;background:#6b6b82"></div>
<div class="a" style="left:615px;top:544px;width:14px;height:12px;border-radius:6px 0 0 6px;background:#1a3ef0"></div>
<div class="a" style="left:621px;top:536px;width:13px;height:19px;border-radius:3px 3px 6px 6px;background:linear-gradient(90deg,#e8e8e8,#fff 40%,#bbb);box-shadow:0 0 1px #777"></div>
<div class="a" style="left:620px;top:560px;width:1px;height:5px;background:#000"></div>
<div class="a" style="left:628px;top:560px;width:1px;height:3px;background:#000"></div>
<div class="a" style="left:636px;top:560px;width:1px;height:3px;background:#000"></div>
<div class="a" style="left:644px;top:560px;width:1px;height:3px;background:#000"></div>
<div class="a" style="left:651px;top:560px;width:1px;height:5px;background:#000"></div>
<div class="a" style="left:659px;top:560px;width:1px;height:3px;background:#000"></div>
<div class="a" style="left:667px;top:560px;width:1px;height:3px;background:#000"></div>
<div class="a" style="left:675px;top:560px;width:1px;height:3px;background:#000"></div>
<div class="a" style="left:683px;top:560px;width:1px;height:5px;background:#000"></div>
<div class="a" style="left:690px;top:560px;width:1px;height:3px;background:#000"></div>
<div class="a" style="left:698px;top:560px;width:1px;height:3px;background:#000"></div>
<div class="a" style="left:706px;top:560px;width:1px;height:3px;background:#000"></div>
<div class="a" style="left:714px;top:560px;width:1px;height:5px;background:#000"></div>
<div class="a t" style="left:617px;top:567px;font-size:11.5px;color:#000;font-weight:400;">0</div>
<div class="a t" style="left:710px;top:567px;font-size:11.5px;color:#000;font-weight:400;">6</div>
<div class="fld" style="left:652px;top:570px;width:27px;height:24px;background:#c2c2c2;box-shadow:inset 1px 1px 0 #a8a8a8,inset -1px -1px 0 #d0d0d0"></div>
<div class="a" style="left:655px;top:572px;width:21px;height:18px;background:#fff"></div>
<div class="a t" style="left:657px;top:576px;font-size:11.5px;color:#000;font-weight:400;">0.4</div>
<div class="fld" style="left:432px;top:575px;width:48px;height:24px;background:#c8c8c8;box-shadow:inset 2px 2px 1px #a0a0a0,inset -1px -1px 0 #d4d4d4"></div>
<div class="a" style="left:435px;top:578px;width:42px;height:18px;background:#d2d2d2"></div>
<div class="a t" style="left:437px;top:582px;font-size:11.3px;color:#000;font-weight:400;">24.407</div>
<div class="fld" style="left:541px;top:575px;width:48px;height:24px;background:#c8c8c8;box-shadow:inset 2px 2px 1px #a0a0a0,inset -1px -1px 0 #d4d4d4"></div>
<div class="a" style="left:544px;top:578px;width:42px;height:18px;background:#d2d2d2"></div>
<div class="a t" style="left:546px;top:582px;font-size:11.3px;color:#000;font-weight:400;">19.955</div>
<div class="sbtn" style="left:431px;top:606px;width:61px;height:20px"></div>
<div class="a t" style="left:311.5px;width:300px;text-align:center;top:611px;font-size:12px;color:#000;font-weight:400;">Zero Disp</div>
<div class="sbtn" style="left:496px;top:606px;width:63px;height:20px"></div>
<div class="a t" style="left:377.5px;width:300px;text-align:center;top:611px;font-size:12px;color:#000;font-weight:400;">Set Home</div>
<div class="sbtn" style="left:563px;top:606px;width:75px;height:20px"></div>
<div class="a t" style="left:450.5px;width:300px;text-align:center;top:611px;font-size:12px;color:#000;font-weight:400;">Go to Home</div>
<div class="a t" style="left:438px;top:676px;font-size:12.3px;color:#000;font-weight:400;">Gain</div>
<div class="a t" style="left:437px;top:699px;font-size:12.3px;color:#000;font-weight:400;">Limit</div>
<div class="fld" style="left:469px;top:669px;width:41px;height:23px;background:#ababab;box-shadow:inset 3px 3px 2px #909090,inset -2px -2px 1px #c4c4c4"></div>
<div class="a" style="left:473px;top:672px;width:34px;height:17px;background:#fbfbfb"></div>
<div class="a t" style="left:475px;top:676px;font-size:11.5px;color:#000;font-weight:400;">1.8</div>
<div class="fld" style="left:469px;top:692px;width:38px;height:23px;background:#ababab;box-shadow:inset 3px 3px 2px #909090,inset -2px -2px 1px #c4c4c4"></div>
<div class="a" style="left:473px;top:695px;width:31px;height:17px;background:#fbfbfb"></div>
<div class="a t" style="left:475px;top:699px;font-size:11.5px;color:#000;font-weight:400;">45</div>
<div class="fld" style="left:613px;top:691px;width:54px;height:24px;background:#ababab;box-shadow:inset 3px 3px 2px #909090,inset -2px -2px 1px #c4c4c4"></div>
<div class="a" style="left:617px;top:694px;width:47px;height:18px;background:#fbfbfb"></div>
<div class="a t" style="left:619px;top:698px;font-size:11.5px;color:#000;font-weight:400;">0</div>
<div class="a t" style="left:508px;top:674px;font-size:12px;color:#000;font-weight:400;">(N/V)</div>
<div class="a t" style="left:544px;top:674px;font-size:12px;color:#000;font-weight:400;">typ: 8.9</div>
<div class="a t" style="left:508px;top:698px;font-size:12px;color:#000;font-weight:400;">(N)</div>
<div class="sbtn" style="left:544px;top:693px;width:63px;height:20px"></div>
<div class="a t" style="left:425px;width:300px;text-align:center;top:698px;font-size:12px;color:#000;font-weight:400;">Zero Load</div>
<div class="fld" style="left:509px;top:762px;width:58px;height:24px;background:#a6a6a6;box-shadow:inset 2px 2px 1px #8a8a8a,inset -1px -1px 0 #c4c4c4"></div>
<div class="a" style="left:512px;top:766px;width:52px;height:17px;background:#d4d4d4"></div>
<div class="a t" style="left:514px;top:770px;font-size:11.3px;color:#000;font-weight:400;">-44.362</div>
<div class="fld" style="left:619px;top:762px;width:53px;height:24px;background:#a6a6a6;box-shadow:inset 2px 2px 1px #8a8a8a,inset -1px -1px 0 #c4c4c4"></div>
<div class="a" style="left:622px;top:766px;width:47px;height:17px;background:#d4d4d4"></div>
<div class="a t" style="left:624px;top:770px;font-size:11.3px;color:#000;font-weight:400;">0.144</div>
<div class="a t" style="left:671px;top:769px;font-size:12.5px;color:#000;font-weight:400;">N</div>
<div class="a" style="left:521px;top:792px;width:33px;height:102px;background:#b8b8b8;box-shadow:inset 3px 3px 2px #8c8c8c,inset -2px -2px 1px #c8c8c8"></div>
<div class="a" style="left:525px;top:889px;width:25px;height:1px;background:#1a3ef0"></div>
<div class="a" style="left:630px;top:792px;width:33px;height:102px;background:#b8b8b8;box-shadow:inset 3px 3px 2px #8c8c8c,inset -2px -2px 1px #c8c8c8"></div>
<div class="a" style="left:634px;top:889px;width:25px;height:1px;background:#e01010"></div>
<div class="a t" style="left:212px;width:300px;text-align:right;top:791px;font-size:12px;color:#000;font-weight:400;">10</div>
<div class="a" style="left:515px;top:796px;width:5px;height:1px;background:#000"></div>
<div class="a t" style="left:212px;width:300px;text-align:right;top:814px;font-size:12px;color:#000;font-weight:400;">5</div>
<div class="a" style="left:515px;top:819px;width:5px;height:1px;background:#000"></div>
<div class="a t" style="left:212px;width:300px;text-align:right;top:838px;font-size:12px;color:#000;font-weight:400;">0</div>
<div class="a" style="left:515px;top:843px;width:5px;height:1px;background:#000"></div>
<div class="a t" style="left:212px;width:300px;text-align:right;top:861px;font-size:12px;color:#000;font-weight:400;">-5</div>
<div class="a" style="left:515px;top:866px;width:5px;height:1px;background:#000"></div>
<div class="a t" style="left:212px;width:300px;text-align:right;top:885px;font-size:12px;color:#000;font-weight:400;">-10</div>
<div class="a" style="left:515px;top:890px;width:5px;height:1px;background:#000"></div>
<div class="a" style="left:517px;top:808px;width:3px;height:1px;background:#000"></div>
<div class="a" style="left:517px;top:831px;width:3px;height:1px;background:#000"></div>
<div class="a" style="left:517px;top:854px;width:3px;height:1px;background:#000"></div>
<div class="a" style="left:517px;top:878px;width:3px;height:1px;background:#000"></div>
<div class="a t" style="left:322px;width:300px;text-align:right;top:791px;font-size:12px;color:#000;font-weight:400;">45</div>
<div class="a t" style="left:322px;width:300px;text-align:right;top:842px;font-size:12px;color:#000;font-weight:400;">20</div>
<div class="a t" style="left:322px;width:300px;text-align:right;top:885px;font-size:12px;color:#000;font-weight:400;">0</div>
<div class="a" style="left:624px;top:796px;width:5px;height:1px;background:#000"></div>
<div class="a" style="left:625px;top:801px;width:3px;height:1px;background:#000"></div>
<div class="a" style="left:625px;top:806px;width:3px;height:1px;background:#000"></div>
<div class="a" style="left:625px;top:812px;width:3px;height:1px;background:#000"></div>
<div class="a" style="left:625px;top:817px;width:3px;height:1px;background:#000"></div>
<div class="a" style="left:625px;top:822px;width:3px;height:1px;background:#000"></div>
<div class="a" style="left:625px;top:827px;width:3px;height:1px;background:#000"></div>
<div class="a" style="left:625px;top:833px;width:3px;height:1px;background:#000"></div>
<div class="a" style="left:625px;top:838px;width:3px;height:1px;background:#000"></div>
<div class="a" style="left:625px;top:843px;width:3px;height:1px;background:#000"></div>
<div class="a" style="left:625px;top:848px;width:3px;height:1px;background:#000"></div>
<div class="a" style="left:625px;top:853px;width:3px;height:1px;background:#000"></div>
<div class="a" style="left:625px;top:859px;width:3px;height:1px;background:#000"></div>
<div class="a" style="left:625px;top:864px;width:3px;height:1px;background:#000"></div>
<div class="a" style="left:625px;top:869px;width:3px;height:1px;background:#000"></div>
<div class="a" style="left:625px;top:874px;width:3px;height:1px;background:#000"></div>
<div class="a" style="left:625px;top:880px;width:3px;height:1px;background:#000"></div>
<div class="a" style="left:625px;top:885px;width:3px;height:1px;background:#000"></div>
<div class="a" style="left:624px;top:890px;width:5px;height:1px;background:#000"></div>
<div class="a t" style="left:483px;top:827px;font-size:12.5px;transform:translate(-50%,-50%) rotate(-90deg);transform-origin:0 0;width:0"></div>
<div class="a t" style="left:474px;top:883px;font-size:12.4px;transform:rotate(-90deg);transform-origin:0 0;line-height:16px">Displacement (mm)</div>
<div class="a t" style="left:585px;top:868px;font-size:12.4px;transform:rotate(-90deg);transform-origin:0 0;line-height:16px">Load (N)</div>
<div class="sbtn" style="left:780px;top:266px;width:96px;height:21px"></div>
<div class="a t" style="left:677px;width:300px;text-align:center;top:271px;font-size:12px;color:#000;font-weight:400;">Edit Profile</div>
<div class="sbtn" style="left:780px;top:287px;width:96px;height:20px"></div>
<div class="a t" style="left:677px;width:300px;text-align:center;top:291px;font-size:12px;color:#000;font-weight:400;">Load Profile</div>
<div class="a" style="left:780px;top:307px;width:96px;height:59px;border:1px solid #1a1a1a;background:#02b13a;box-shadow:inset 2px 2px 1px #40d46a,inset -2px -2px 1px #057a26"></div>
<div class="a t" style="left:678px;width:300px;text-align:center;top:327px;font-size:26px;color:#f2fff2;font-weight:700;">Run</div>
<div class="a t" style="left:678px;width:300px;text-align:center;top:384px;font-size:12.3px;color:#000;font-weight:400;">Time (s)</div>
<div class="fld" style="left:801px;top:399px;width:53px;height:25px;background:#a6a6a6;box-shadow:inset 2px 2px 1px #8a8a8a,inset -1px -1px 0 #c4c4c4"></div>
<div class="a" style="left:804px;top:403px;width:46px;height:18px;background:#d4d4d4"></div>
<div class="a t" style="left:806px;top:407px;font-size:11.5px;color:#000;font-weight:400;">604</div>
<div class="a" style="left:1258px;top:238px;width:194px;height:24px;background:#c0c0c0;border-right:2px solid #6a6a6a;border-bottom:1px solid #8a8a8a;box-shadow:inset 8px 0 6px -4px #d6d6d6"></div>
<div class="a t" style="left:1274px;top:244px;font-size:12.2px;color:#000;font-weight:400;">Actual</div>
<div class="a" style="left:1324px;top:241px;width:29px;height:19px;background:#fff;border:1px solid #d0d0d0"></div>
<svg class="a" style="left:1325px;top:242px" width="27" height="17"><path d="M2 13.5L15.5 3L26 12" stroke="#0a32e6" stroke-width="3" fill="none"/></svg>
<div class="a t" style="left:1359px;top:244px;font-size:12.2px;color:#000;font-weight:400;">Desired</div>
<div class="a" style="left:1409px;top:241px;width:29px;height:19px;background:#fff;border:1px solid #d0d0d0"></div>
<svg class="a" style="left:1410px;top:242px" width="27" height="17"><path d="M2 13.5L15.5 3L26 12" stroke="#ff3030" stroke-width="3" fill="none"/></svg>
<div class="a" style="left:900px;top:264px;width:553px;height:283px;background:#c0c0c0;border-bottom:1px solid #7a7a7a;border-right:1px solid #555"></div>
<div class="a" style="left:900px;top:264px;width:12px;height:283px;background:linear-gradient(90deg,#c8c8c8,#d6d6d6 40%,#cfcfcf)"></div>
<div class="a" style="left:900px;top:264px;width:553px;height:3px;background:#d4d4d4"></div>
<div class="a" style="left:1439px;top:264px;width:13px;height:282px;background:linear-gradient(90deg,#c0c0c0,#9a9a9a 60%,#6a6a6a)"></div>
<div class="a" style="left:912px;top:542px;width:527px;height:4px;background:linear-gradient(#c0c0c0,#9c9c9c)"></div>
<svg class="a" style="left:969px;top:273px" width="460" height="233" shape-rendering="crispEdges"><rect x="0" y="0" width="460" height="233" fill="#fafafa"/><path d="M0.5 0V232" stroke="#8a8a8a"/><path d="M8.5 1V232" stroke="#000"/><path d="M15.5 1V232" stroke="#000"/><path d="M22.5 1V232" stroke="#000"/><path d="M29.5 1V232" stroke="#000"/><path d="M36.5 1V232" stroke="#000"/><path d="M43.5 1V232" stroke="#000"/><path d="M50.5 1V232" stroke="#000"/><path d="M57.5 1V232" stroke="#000"/><path d="M64.5 1V232" stroke="#000"/><path d="M71.5 1V232" stroke="#000"/><path d="M78.5 1V232" stroke="#000"/><path d="M85.5 1V232" stroke="#000"/><path d="M92.5 1V232" stroke="#000"/><path d="M99.5 1V232" stroke="#000"/><path d="M106.5 1V232" stroke="#000"/><path d="M113.5 1V232" stroke="#000"/><path d="M120.5 1V232" stroke="#000"/><path d="M128.5 1V232" stroke="#000"/><path d="M135.5 1V232" stroke="#000"/><path d="M142.5 1V232" stroke="#000"/><path d="M149.5 1V232" stroke="#000"/><path d="M156.5 1V232" stroke="#000"/><path d="M163.5 1V232" stroke="#000"/><path d="M170.5 1V232" stroke="#000"/><path d="M177.5 1V232" stroke="#000"/><path d="M184.5 1V232" stroke="#000"/><path d="M191.5 1V232" stroke="#000"/><path d="M198.5 1V232" stroke="#000"/><path d="M205.5 1V232" stroke="#000"/><path d="M212.5 1V232" stroke="#000"/><path d="M219.5 1V232" stroke="#000"/><path d="M226.5 1V232" stroke="#000"/><path d="M233.5 1V232" stroke="#000"/><path d="M240.5 1V232" stroke="#000"/><path d="M247.5 1V232" stroke="#000"/><path d="M254.5 1V232" stroke="#000"/><path d="M261.5 1V232" stroke="#000"/><path d="M268.5 1V232" stroke="#000"/><path d="M275.5 1V232" stroke="#000"/><path d="M282.5 1V232" stroke="#000"/><path d="M289.5 1V232" stroke="#000"/><path d="M296.5 1V232" stroke="#000"/><path d="M303.5 1V232" stroke="#000"/><path d="M310.5 1V232" stroke="#000"/><path d="M317.5 1V232" stroke="#000"/><path d="M325.5 1V232" stroke="#000"/><path d="M332.5 1V232" stroke="#000"/><path d="M339.5 1V232" stroke="#000"/><path d="M346.5 1V232" stroke="#000"/><path d="M353.5 1V232" stroke="#000"/><path d="M360.5 1V232" stroke="#000"/><path d="M367.5 1V232" stroke="#000"/><path d="M374.5 1V232" stroke="#000"/><path d="M381.5 1V232" stroke="#000"/><path d="M388.5 1V232" stroke="#000"/><path d="M395.5 1V232" stroke="#000"/><path d="M402.5 1V232" stroke="#000"/><path d="M409.5 1V232" stroke="#000"/><path d="M416.5 1V232" stroke="#000"/><path d="M423.5 1V232" stroke="#000"/><path d="M430.5 1V232" stroke="#000"/><path d="M437.5 1V232" stroke="#000"/><path d="M444.5 1V232" stroke="#000"/><path d="M451.5 1V232" stroke="#000"/><path d="M1 231.5H460" stroke="#000"/><path d="M1 205.5H460" stroke="#000"/><path d="M1 180.5H460" stroke="#000"/><path d="M1 154.5H460" stroke="#000"/><path d="M1 129.5H460" stroke="#000"/><path d="M1 103.5H460" stroke="#000"/><path d="M1 78.5H460" stroke="#000"/><path d="M1 52.5H460" stroke="#000"/><path d="M1 27.5H460" stroke="#000"/></svg>
<svg class="a" style="left:969px;top:273px" width="460" height="233" shape-rendering="crispEdges"><path d="M2 24 H3 V5 H4 V4.5 H428" stroke="#ff2020" stroke-width="1" fill="none"/><rect x="1" y="193" width="2" height="39" fill="#1030f0"/><rect x="2" y="111" width="2" height="84" fill="#1030f0"/><rect x="3" y="32" width="3" height="82" fill="#1030f0"/><rect x="3" y="5" width="3" height="30" fill="#1030f0"/><rect x="3" y="5" width="425" height="3" fill="#1030f0"/></svg>
<div class="a t" style="left:661px;width:300px;text-align:right;top:500px;font-size:11.8px;color:#000;font-weight:400;">0</div>
<div class="a" style="left:963px;top:504px;width:6px;height:1px;background:#000"></div>
<div class="a t" style="left:661px;width:300px;text-align:right;top:474px;font-size:11.8px;color:#000;font-weight:400;">0.01</div>
<div class="a" style="left:963px;top:478px;width:6px;height:1px;background:#000"></div>
<div class="a t" style="left:661px;width:300px;text-align:right;top:449px;font-size:11.8px;color:#000;font-weight:400;">0.02</div>
<div class="a" style="left:963px;top:453px;width:6px;height:1px;background:#000"></div>
<div class="a t" style="left:661px;width:300px;text-align:right;top:423px;font-size:11.8px;color:#000;font-weight:400;">0.03</div>
<div class="a" style="left:963px;top:427px;width:6px;height:1px;background:#000"></div>
<div class="a t" style="left:661px;width:300px;text-align:right;top:398px;font-size:11.8px;color:#000;font-weight:400;">0.04</div>
<div class="a" style="left:963px;top:402px;width:6px;height:1px;background:#000"></div>
<div class="a t" style="left:661px;width:300px;text-align:right;top:372px;font-size:11.8px;color:#000;font-weight:400;">0.05</div>
<div class="a" style="left:963px;top:376px;width:6px;height:1px;background:#000"></div>
<div class="a t" style="left:661px;width:300px;text-align:right;top:347px;font-size:11.8px;color:#000;font-weight:400;">0.06</div>
<div class="a" style="left:963px;top:351px;width:6px;height:1px;background:#000"></div>
<div class="a t" style="left:661px;width:300px;text-align:right;top:321px;font-size:11.8px;color:#000;font-weight:400;">0.07</div>
<div class="a" style="left:963px;top:325px;width:6px;height:1px;background:#000"></div>
<div class="a t" style="left:661px;width:300px;text-align:right;top:296px;font-size:11.8px;color:#000;font-weight:400;">0.08</div>
<div class="a" style="left:963px;top:300px;width:6px;height:1px;background:#000"></div>
<div class="a t" style="left:661px;width:300px;text-align:right;top:270px;font-size:11.8px;color:#000;font-weight:400;">0.09</div>
<div class="a" style="left:963px;top:274px;width:6px;height:1px;background:#000"></div>
<div class="a" style="left:970px;top:507px;width:1px;height:5px;background:#000"></div>
<div class="a t" style="left:820.5px;width:300px;text-align:center;top:515px;font-size:11.8px;color:#000;font-weight:400;">0</div>
<div class="a" style="left:1005px;top:507px;width:1px;height:5px;background:#000"></div>
<div class="a t" style="left:855.5px;width:300px;text-align:center;top:515px;font-size:11.8px;color:#000;font-weight:400;">50</div>
<div class="a" style="left:1040px;top:507px;width:1px;height:5px;background:#000"></div>
<div class="a t" style="left:890.5px;width:300px;text-align:center;top:515px;font-size:11.8px;color:#000;font-weight:400;">100</div>
<div class="a" style="left:1075px;top:507px;width:1px;height:5px;background:#000"></div>
<div class="a t" style="left:925.5px;width:300px;text-align:center;top:515px;font-size:11.8px;color:#000;font-weight:400;">150</div>
<div class="a" style="left:1111px;top:507px;width:1px;height:5px;background:#000"></div>
<div class="a t" style="left:961.5px;width:300px;text-align:center;top:515px;font-size:11.8px;color:#000;font-weight:400;">200</div>
<div class="a" style="left:1146px;top:507px;width:1px;height:5px;background:#000"></div>
<div class="a t" style="left:996.5px;width:300px;text-align:center;top:515px;font-size:11.8px;color:#000;font-weight:400;">250</div>
<div class="a" style="left:1181px;top:507px;width:1px;height:5px;background:#000"></div>
<div class="a t" style="left:1031.5px;width:300px;text-align:center;top:515px;font-size:11.8px;color:#000;font-weight:400;">300</div>
<div class="a" style="left:1216px;top:507px;width:1px;height:5px;background:#000"></div>
<div class="a t" style="left:1066.5px;width:300px;text-align:center;top:515px;font-size:11.8px;color:#000;font-weight:400;">350</div>
<div class="a" style="left:1251px;top:507px;width:1px;height:5px;background:#000"></div>
<div class="a t" style="left:1101.5px;width:300px;text-align:center;top:515px;font-size:11.8px;color:#000;font-weight:400;">400</div>
<div class="a" style="left:1286px;top:507px;width:1px;height:5px;background:#000"></div>
<div class="a t" style="left:1136.5px;width:300px;text-align:center;top:515px;font-size:11.8px;color:#000;font-weight:400;">450</div>
<div class="a" style="left:1322px;top:507px;width:1px;height:5px;background:#000"></div>
<div class="a t" style="left:1172.5px;width:300px;text-align:center;top:515px;font-size:11.8px;color:#000;font-weight:400;">500</div>
<div class="a" style="left:1357px;top:507px;width:1px;height:5px;background:#000"></div>
<div class="a t" style="left:1207.5px;width:300px;text-align:center;top:515px;font-size:11.8px;color:#000;font-weight:400;">550</div>
<div class="a" style="left:1392px;top:507px;width:1px;height:5px;background:#000"></div>
<div class="a t" style="left:1242.5px;width:300px;text-align:center;top:515px;font-size:11.8px;color:#000;font-weight:400;">600</div>
<div class="a" style="left:1427px;top:507px;width:1px;height:5px;background:#000"></div>
<div class="a t" style="left:1277.5px;width:300px;text-align:center;top:515px;font-size:11.8px;color:#000;font-weight:400;">650</div>
<div class="a t" style="left:1045px;width:300px;text-align:center;top:532px;font-size:13px;color:#000;font-weight:700;">Time (s)</div>
<div class="a t" style="left:921px;top:476px;font-size:13px;font-weight:700;transform:rotate(-90deg);transform-origin:0 0;line-height:16px">Relative Displacement (mm)</div>
<div class="a t" style="left:764px;top:575px;font-size:13px;color:#000;font-weight:700;">Load v Time</div>
<div class="a" style="left:757px;top:595px;width:341px;height:299px;background:#c0c0c0;border-bottom:1px solid #7a7a7a;border-right:1px solid #555"></div>
<div class="a" style="left:757px;top:595px;width:12px;height:299px;background:linear-gradient(90deg,#c8c8c8,#d6d6d6 40%,#cfcfcf)"></div>
<div class="a" style="left:757px;top:595px;width:341px;height:3px;background:#d4d4d4"></div>
<div class="a" style="left:1084px;top:595px;width:13px;height:298px;background:linear-gradient(90deg,#c0c0c0,#9a9a9a 60%,#6a6a6a)"></div>
<div class="a" style="left:769px;top:889px;width:315px;height:4px;background:linear-gradient(#c0c0c0,#9c9c9c)"></div>
<svg class="a" style="left:839px;top:604px" width="236" height="250" shape-rendering="crispEdges"><rect x="0" y="0" width="236" height="250" fill="#fafafa"/><path d="M0.5 249V0.5H235" fill="none" stroke="#000"/><path d="M235.5 0V250M0 249.5H236" fill="none" stroke="#808080"/><path d="M59.5 0V249" stroke="#000"/><path d="M118.5 0V249" stroke="#000"/><path d="M176.5 0V249" stroke="#000"/><path d="M0 28.5H235" stroke="#000"/><path d="M0 56.5H235" stroke="#000"/><path d="M0 83.5H235" stroke="#000"/><path d="M0 111.5H235" stroke="#000"/><path d="M0 138.5H235" stroke="#000"/><path d="M0 166.5H235" stroke="#000"/><path d="M0 193.5H235" stroke="#000"/><path d="M0 221.5H235" stroke="#000"/></svg>
<svg class="a" style="left:839px;top:604px" width="236" height="250"><path d="M1.0 1.0 L3.0 1.0 L3.0 9.3 L6.0 9.3 L6.0 19.5 L8.0 19.5 L8.0 34.3 L12.0 34.3 L12.0 30.9 L13.0 30.9 L13.0 39.6 L16.0 39.6 L16.0 40.7 L19.0 40.7 L19.0 21.9 L23.0 21.9 L23.0 30.6 L25.0 30.6 L25.0 40.9 L27.0 40.9 L27.0 40.7 L29.0 40.7 L29.0 43.7 L30.0 43.7 L30.0 19.6 L31.0 19.6 L31.0 51.0 L32.0 51.0 L32.0 46.8 L33.0 46.8 L33.0 37.9 L36.0 37.9 L36.0 43.2 L40.0 43.2 L40.0 47.8 L42.0 47.8 L42.0 51.5 L43.0 51.5 L43.0 56.4 L46.0 56.4 L46.0 53.1 L48.0 53.1 L48.0 33.1 L49.0 33.1 L49.0 56.3 L52.0 56.3 L52.0 57.6 L53.0 57.6 L53.0 60.7 L55.0 60.7 L55.0 35.6 L57.0 35.6 L57.0 53.7 L60.0 53.7 L60.0 56.8 L62.0 56.8 L62.0 45.7 L66.0 45.7 L66.0 59.4 L69.0 59.4 L69.0 63.3 L72.0 63.3 L72.0 57.5 L74.0 57.5 L74.0 44.9 L76.0 44.9 L76.0 45.8 L80.0 45.8 L80.0 64.1 L84.0 64.1 L84.0 57.3 L86.0 57.3 L86.0 40.9 L89.0 40.9 L89.0 36.5 L91.0 36.5 L91.0 58.5 L93.0 58.5 L93.0 54.5 L94.0 54.5 L94.0 53.6 L97.0 53.6 L97.0 57.8 L100.0 57.8 L100.0 60.5 L102.0 60.5 L102.0 61.5 L105.0 61.5 L105.0 57.2 L107.0 57.2 L107.0 66.0 L108.0 66.0 L108.0 63.6 L111.0 63.6 L111.0 62.0 L113.0 62.0 L113.0 57.1 L116.0 57.1 L116.0 55.3 L119.0 55.3 L119.0 54.7 L121.0 54.7 L121.0 37.0 L123.0 37.0 L123.0 54.4 L127.0 54.4 L127.0 52.4 L129.0 52.4 L129.0 58.6 L132.0 58.6 L132.0 64.2 L134.0 64.2 L134.0 67.6 L136.0 67.6 L136.0 37.7 L138.0 37.7 L138.0 57.1 L142.0 57.1 L142.0 57.0 L145.0 57.0 L145.0 42.0 L146.0 42.0 L146.0 66.1 L148.0 66.1 L148.0 62.5 L149.0 62.5 L149.0 51.6 L151.0 51.6 L151.0 69.5 L154.0 69.5 L154.0 59.8 L155.0 59.8 L155.0 68.0 L157.0 68.0 L157.0 60.2 L159.0 60.2 L159.0 60.0 L161.0 60.0 L161.0 68.9 L163.0 68.9 L163.0 58.6 L166.0 58.6 L166.0 63.0 L169.0 63.0 L169.0 66.8 L171.0 66.8 L171.0 70.2 L173.0 70.2 L173.0 59.9 L175.0 59.9 L175.0 67.7 L178.0 67.7 L178.0 66.6 L179.0 66.6 L179.0 207.2 L178.0 207.2 L178.0 199.2 L175.0 199.2 L175.0 201.8 L173.0 201.8 L173.0 229.0 L171.0 229.0 L171.0 205.6 L169.0 205.6 L169.0 209.5 L166.0 209.5 L166.0 211.3 L163.0 211.3 L163.0 211.8 L161.0 211.8 L161.0 203.8 L159.0 203.8 L159.0 204.8 L157.0 204.8 L157.0 219.8 L155.0 219.8 L155.0 200.8 L154.0 200.8 L154.0 206.0 L151.0 206.0 L151.0 198.8 L149.0 198.8 L149.0 200.9 L148.0 200.9 L148.0 203.8 L146.0 203.8 L146.0 205.5 L145.0 205.5 L145.0 199.7 L142.0 199.7 L142.0 205.2 L138.0 205.2 L138.0 228.0 L136.0 228.0 L136.0 210.7 L134.0 210.7 L134.0 209.5 L132.0 209.5 L132.0 202.3 L129.0 202.3 L129.0 209.7 L127.0 209.7 L127.0 220.0 L123.0 220.0 L123.0 201.6 L121.0 201.6 L121.0 198.3 L119.0 198.3 L119.0 212.7 L116.0 212.7 L116.0 206.2 L113.0 206.2 L113.0 223.2 L111.0 223.2 L111.0 202.8 L108.0 202.8 L108.0 224.0 L107.0 224.0 L107.0 209.6 L105.0 209.6 L105.0 211.3 L102.0 211.3 L102.0 198.6 L100.0 198.6 L100.0 209.5 L97.0 209.5 L97.0 209.4 L94.0 209.4 L94.0 200.0 L93.0 200.0 L93.0 200.5 L91.0 200.5 L91.0 198.9 L89.0 198.9 L89.0 221.9 L86.0 221.9 L86.0 210.1 L84.0 210.1 L84.0 208.7 L80.0 208.7 L80.0 211.1 L76.0 211.1 L76.0 211.0 L74.0 211.0 L74.0 207.0 L72.0 207.0 L72.0 202.8 L69.0 202.8 L69.0 198.5 L66.0 198.5 L66.0 206.6 L62.0 206.6 L62.0 217.0 L60.0 217.0 L60.0 202.5 L57.0 202.5 L57.0 201.7 L55.0 201.7 L55.0 218.5 L53.0 218.5 L53.0 205.8 L52.0 205.8 L52.0 211.6 L49.0 211.6 L49.0 207.8 L48.0 207.8 L48.0 200.0 L46.0 200.0 L46.0 199.4 L43.0 199.4 L43.0 188.5 L42.0 188.5 L42.0 206.0 L40.0 206.0 L40.0 200.2 L36.0 200.2 L36.0 193.6 L33.0 193.6 L33.0 190.6 L32.0 190.6 L32.0 201.6 L31.0 201.6 L31.0 200.9 L30.0 200.9 L30.0 198.2 L29.0 198.2 L29.0 212.5 L27.0 212.5 L27.0 196.3 L25.0 196.3 L25.0 193.3 L23.0 193.3 L23.0 193.8 L19.0 193.8 L19.0 199.1 L16.0 199.1 L16.0 187.4 L13.0 187.4 L13.0 199.2 L12.0 199.2 L12.0 166.2 L8.0 166.2 L8.0 173.1 L6.0 173.1 L6.0 166.0 L3.0 166.0 L3.0 166.0 L1.0 166.0Z" fill="#ff0000" shape-rendering="crispEdges"/><path d="M2 160.5V229.8" stroke="#f00" stroke-width="2" shape-rendering="crispEdges"/></svg>
<div class="a t" style="left:531px;width:300px;text-align:right;top:600px;font-size:11.8px;color:#000;font-weight:400;">0.4</div>
<div class="a" style="left:833px;top:605px;width:6px;height:1px;background:#000"></div>
<div class="a t" style="left:531px;width:300px;text-align:right;top:627px;font-size:11.8px;color:#000;font-weight:400;">0.35</div>
<div class="a" style="left:833px;top:632px;width:6px;height:1px;background:#000"></div>
<div class="a t" style="left:531px;width:300px;text-align:right;top:655px;font-size:11.8px;color:#000;font-weight:400;">0.3</div>
<div class="a" style="left:833px;top:660px;width:6px;height:1px;background:#000"></div>
<div class="a t" style="left:531px;width:300px;text-align:right;top:682px;font-size:11.8px;color:#000;font-weight:400;">0.25</div>
<div class="a" style="left:833px;top:687px;width:6px;height:1px;background:#000"></div>
<div class="a t" style="left:531px;width:300px;text-align:right;top:710px;font-size:11.8px;color:#000;font-weight:400;">0.2</div>
<div class="a" style="left:833px;top:715px;width:6px;height:1px;background:#000"></div>
<div class="a t" style="left:531px;width:300px;text-align:right;top:737px;font-size:11.8px;color:#000;font-weight:400;">0.15</div>
<div class="a" style="left:833px;top:742px;width:6px;height:1px;background:#000"></div>
<div class="a t" style="left:531px;width:300px;text-align:right;top:765px;font-size:11.8px;color:#000;font-weight:400;">0.1</div>
<div class="a" style="left:833px;top:770px;width:6px;height:1px;background:#000"></div>
<div class="a t" style="left:531px;width:300px;text-align:right;top:792px;font-size:11.8px;color:#000;font-weight:400;">0.05</div>
<div class="a" style="left:833px;top:797px;width:6px;height:1px;background:#000"></div>
<div class="a t" style="left:531px;width:300px;text-align:right;top:820px;font-size:11.8px;color:#000;font-weight:400;">0</div>
<div class="a" style="left:833px;top:825px;width:6px;height:1px;background:#000"></div>
<div class="a t" style="left:531px;width:300px;text-align:right;top:847px;font-size:11.8px;color:#000;font-weight:400;">-0.05</div>
<div class="a" style="left:833px;top:852px;width:6px;height:1px;background:#000"></div>
<div class="a" style="left:840px;top:855px;width:1px;height:5px;background:#000"></div>
<div class="a t" style="left:690.5px;width:300px;text-align:center;top:863px;font-size:11.8px;color:#000;font-weight:400;">0</div>
<div class="a" style="left:898px;top:855px;width:1px;height:5px;background:#000"></div>
<div class="a t" style="left:748.5px;width:300px;text-align:center;top:863px;font-size:11.8px;color:#000;font-weight:400;">200</div>
<div class="a" style="left:957px;top:855px;width:1px;height:5px;background:#000"></div>
<div class="a t" style="left:807.5px;width:300px;text-align:center;top:863px;font-size:11.8px;color:#000;font-weight:400;">400</div>
<div class="a" style="left:1015px;top:855px;width:1px;height:5px;background:#000"></div>
<div class="a t" style="left:865.5px;width:300px;text-align:center;top:863px;font-size:11.8px;color:#000;font-weight:400;">600</div>
<div class="a" style="left:1073px;top:855px;width:1px;height:5px;background:#000"></div>
<div class="a t" style="left:923.5px;width:300px;text-align:center;top:863px;font-size:11.8px;color:#000;font-weight:400;">800</div>
<div class="a t" style="left:738px;width:300px;text-align:center;top:879.5px;font-size:13px;color:#000;font-weight:700;">Time (s)</div>
<div class="a t" style="left:786px;top:753px;font-size:13px;font-weight:700;transform:rotate(-90deg);transform-origin:0 0;line-height:16px">Load (N)</div>
<div class="a t" style="left:1172px;top:575px;font-size:13px;color:#000;font-weight:700;">Load v Disp</div>
<div class="a" style="left:1165px;top:595px;width:342px;height:299px;background:#c0c0c0;border-bottom:1px solid #7a7a7a;border-right:1px solid #555"></div>
<div class="a" style="left:1165px;top:595px;width:12px;height:299px;background:linear-gradient(90deg,#c8c8c8,#d6d6d6 40%,#cfcfcf)"></div>
<div class="a" style="left:1165px;top:595px;width:342px;height:3px;background:#d4d4d4"></div>
<div class="a" style="left:1493px;top:595px;width:13px;height:298px;background:linear-gradient(90deg,#c0c0c0,#9a9a9a 60%,#6a6a6a)"></div>
<div class="a" style="left:1177px;top:889px;width:316px;height:4px;background:linear-gradient(#c0c0c0,#9c9c9c)"></div>
<svg class="a" style="left:1247px;top:604px" width="236" height="250" shape-rendering="crispEdges"><rect x="0" y="0" width="236" height="250" fill="#fafafa"/><path d="M0.5 249V0.5H235" fill="none" stroke="#000"/><path d="M235.5 0V250M0 249.5H236" fill="none" stroke="#808080"/><path d="M48.5 0V249" stroke="#000"/><path d="M94.5 0V249" stroke="#000"/><path d="M141.5 0V249" stroke="#000"/><path d="M187.5 0V249" stroke="#000"/><path d="M0 28.5H235" stroke="#000"/><path d="M0 56.5H235" stroke="#000"/><path d="M0 83.5H235" stroke="#000"/><path d="M0 111.5H235" stroke="#000"/><path d="M0 138.5H235" stroke="#000"/><path d="M0 166.5H235" stroke="#000"/><path d="M0 193.5H235" stroke="#000"/><path d="M0 221.5H235" stroke="#000"/></svg>
<svg class="a" style="left:1247px;top:604px" width="236" height="250"><path d="M47.5 174.2 L51.6 168.1 L55.6 161.9 L59.7 155.8 L63.8 152.5 L67.8 152.9 L71.9 153.4 L75.9 153.8 L80.0 154.3 L84.1 154.8 L88.1 153.5 L92.2 150.7 L96.2 148.0 L100.3 145.2 L104.4 142.4 L108.4 139.6 L112.5 136.3 L116.6 132.8 L120.6 129.2 L124.7 125.7 L128.8 122.2 L132.8 118.6 L136.9 115.3 L140.9 112.0 L145.0 108.8 L149.1 105.5 L153.1 102.3 L157.2 99.0 L161.2 92.8 L165.3 85.9 L169.4 79.1 L173.4 77.2 L177.5 76.3 L181.6 75.4 L185.6 71.4 L189.7 67.1 L193.8 62.9 L197.8 59.7 L201.9 56.6 L205.9 53.6 L210.0 50.5 L210.0 67.0 L205.9 70.1 L201.9 73.1 L197.8 76.2 L193.8 79.4 L189.7 83.6 L185.6 87.9 L181.6 91.9 L177.5 92.8 L173.4 93.7 L169.4 95.6 L165.3 102.4 L161.2 109.3 L157.2 115.5 L153.1 118.8 L149.1 122.0 L145.0 125.3 L140.9 128.5 L136.9 131.8 L132.8 135.1 L128.8 138.7 L124.7 142.2 L120.6 145.7 L116.6 149.3 L112.5 152.8 L108.4 156.1 L104.4 158.9 L100.3 161.7 L96.2 164.5 L92.2 167.2 L88.1 170.0 L84.1 171.3 L80.0 170.8 L75.9 170.3 L71.9 169.9 L67.8 169.4 L63.8 169.0 L59.7 172.3 L55.6 178.4 L51.6 184.6 L47.5 190.8Z" fill="#ff0000"/><path d="M47.5 159.2 L48.6 214.6 L49.9 175.2 L51.1 201.2 L51.7 157.9 L52.7 207.6 L53.4 140.6 L54.0 218.4 L54.6 168.9 L55.3 180.6 L56.5 156.6 L57.4 192.6 L58.7 140.0 L59.9 176.3 L60.5 142.8 L61.5 164.1 L62.3 147.6 L63.1 173.8 L64.2 156.1 L64.7 188.3 L65.2 132.1 L66.2 174.8 L67.5 151.9 L68.7 195.1 L69.5 141.3 L70.1 188.9 L71.3 157.6 L71.8 175.6 L73.1 147.8 L74.0 174.9 L74.7 138.9 L75.9 192.0 L76.9 146.1 L77.9 192.3 L78.7 157.8 L79.2 181.5 L79.8 135.6 L80.8 205.6 L81.4 132.1 L82.3 198.6 L83.6 145.3 L84.7 181.7 L85.5 155.6 L86.8 197.1 L87.7 136.2 L88.8 192.7 L89.9 132.2 L91.0 187.7 L92.0 147.1 L93.1 183.9 L94.4 133.3 L94.9 177.9 L96.0 138.4 L97.0 184.8 L98.0 127.9 L98.8 185.0 L99.8 118.8 L100.7 173.3 L101.9 118.6 L103.0 178.1 L103.6 122.7 L104.6 167.1 L105.7 125.9 L106.3 157.3 L107.3 138.6 L108.3 152.1 L109.0 130.3 L109.6 170.8 L110.4 123.4 L111.1 192.2 L111.8 109.2 L112.6 148.4 L113.2 123.2 L114.2 177.5 L115.0 112.8 L115.8 149.1 L116.8 106.5 L117.7 154.3 L118.2 133.3 L119.2 146.1 L120.4 122.5 L121.1 149.4 L121.9 101.9 L122.9 146.8 L123.8 118.3 L125.1 152.6 L126.0 126.1 L126.8 144.5 L128.0 127.9 L128.7 164.1 L129.4 96.4 L130.1 152.0 L131.2 105.6 L131.8 155.7 L132.7 113.2 L133.6 144.3 L134.7 91.3 L135.6 157.6 L136.5 120.6 L137.3 144.9 L138.3 103.7 L139.2 137.4 L139.8 108.7 L140.4 151.1 L141.2 107.9 L142.4 126.5 L143.4 99.2 L144.0 139.9 L144.6 107.0 L145.7 159.3 L147.0 79.7 L147.5 145.5 L148.5 80.0 L149.1 126.1 L149.8 90.3 L150.4 145.7 L151.2 90.8 L152.3 157.1 L153.0 88.0 L154.3 142.5 L154.9 85.5 L156.1 129.2 L156.8 86.6 L157.9 137.9 L158.7 78.3 L159.8 145.3 L160.4 95.7 L161.1 133.1 L161.8 52.8 L162.4 106.9 L163.4 65.7 L164.5 142.3 L165.2 83.8 L166.2 106.9 L166.8 61.4 L168.0 106.7 L168.9 65.8 L170.0 110.8 L170.7 82.0 L171.5 128.5 L172.7 62.4 L173.6 101.9 L174.4 69.8 L175.0 96.2 L175.7 72.7 L176.6 88.6 L177.4 50.9 L178.4 102.6 L179.0 59.4 L180.0 110.8 L180.7 80.2 L181.2 99.7 L182.0 70.4 L182.8 109.6 L183.4 71.3 L184.6 104.8 L185.9 57.4 L186.8 82.7 L188.0 57.2 L188.6 81.6 L189.5 30.3 L190.1 102.6 L190.9 52.5 L192.2 81.5 L193.0 39.1 L193.6 91.9 L194.5 39.4 L195.1 90.6 L196.0 54.1 L197.1 101.4 L198.0 37.8 L198.6 99.3 L199.7 44.1 L200.4 71.5 L201.4 36.6 L201.9 74.2 L202.7 58.3 L203.5 91.3 L204.7 38.4 L205.6 79.4 L206.7 27.0 L207.7 72.1 L208.5 42.2 L209.2 84.4 L209.8 31.0" stroke="#ff0000" stroke-width="2.4" fill="none" stroke-linejoin="miter"/><path d="M211.5 1V223.8" stroke="#f00" stroke-width="2.6"/></svg>
<div class="a t" style="left:939px;width:300px;text-align:right;top:600px;font-size:11.8px;color:#000;font-weight:400;">0.4</div>
<div class="a" style="left:1241px;top:605px;width:6px;height:1px;background:#000"></div>
<div class="a t" style="left:939px;width:300px;text-align:right;top:627px;font-size:11.8px;color:#000;font-weight:400;">0.35</div>
<div class="a" style="left:1241px;top:632px;width:6px;height:1px;background:#000"></div>
<div class="a t" style="left:939px;width:300px;text-align:right;top:655px;font-size:11.8px;color:#000;font-weight:400;">0.3</div>
<div class="a" style="left:1241px;top:660px;width:6px;height:1px;background:#000"></div>
<div class="a t" style="left:939px;width:300px;text-align:right;top:682px;font-size:11.8px;color:#000;font-weight:400;">0.25</div>
<div class="a" style="left:1241px;top:687px;width:6px;height:1px;background:#000"></div>
<div class="a t" style="left:939px;width:300px;text-align:right;top:710px;font-size:11.8px;color:#000;font-weight:400;">0.2</div>
<div class="a" style="left:1241px;top:715px;width:6px;height:1px;background:#000"></div>
<div class="a t" style="left:939px;width:300px;text-align:right;top:737px;font-size:11.8px;color:#000;font-weight:400;">0.15</div>
<div class="a" style="left:1241px;top:742px;width:6px;height:1px;background:#000"></div>
<div class="a t" style="left:939px;width:300px;text-align:right;top:765px;font-size:11.8px;color:#000;font-weight:400;">0.1</div>
<div class="a" style="left:1241px;top:770px;width:6px;height:1px;background:#000"></div>
<div class="a t" style="left:939px;width:300px;text-align:right;top:792px;font-size:11.8px;color:#000;font-weight:400;">0.05</div>
<div class="a" style="left:1241px;top:797px;width:6px;height:1px;background:#000"></div>
<div class="a t" style="left:939px;width:300px;text-align:right;top:820px;font-size:11.8px;color:#000;font-weight:400;">0</div>
<div class="a" style="left:1241px;top:825px;width:6px;height:1px;background:#000"></div>
<div class="a t" style="left:939px;width:300px;text-align:right;top:847px;font-size:11.8px;color:#000;font-weight:400;">-0.05</div>
<div class="a" style="left:1241px;top:852px;width:6px;height:1px;background:#000"></div>
<div class="a" style="left:1248px;top:855px;width:1px;height:5px;background:#000"></div>
<div class="a t" style="left:1098.5px;width:300px;text-align:center;top:863px;font-size:11.8px;color:#000;font-weight:400;">-44.475</div>
<div class="a" style="left:1295px;top:855px;width:1px;height:5px;background:#000"></div>
<div class="a t" style="left:1145.5px;width:300px;text-align:center;top:863px;font-size:11.8px;color:#000;font-weight:400;">-44.45</div>
<div class="a" style="left:1341px;top:855px;width:1px;height:5px;background:#000"></div>
<div class="a t" style="left:1191.5px;width:300px;text-align:center;top:863px;font-size:11.8px;color:#000;font-weight:400;">-44.425</div>
<div class="a" style="left:1388px;top:855px;width:1px;height:5px;background:#000"></div>
<div class="a t" style="left:1238.5px;width:300px;text-align:center;top:863px;font-size:11.8px;color:#000;font-weight:400;">-44.4</div>
<div class="a" style="left:1434px;top:855px;width:1px;height:5px;background:#000"></div>
<div class="a t" style="left:1284.5px;width:300px;text-align:center;top:863px;font-size:11.8px;color:#000;font-weight:400;">-44.375</div>
<div class="a" style="left:1481px;top:855px;width:1px;height:5px;background:#000"></div>
<div class="a t" style="left:1331.5px;width:300px;text-align:center;top:863px;font-size:11.8px;color:#000;font-weight:400;">-44.35</div>
<div class="a t" style="left:1151px;width:300px;text-align:center;top:879.5px;font-size:13px;color:#000;font-weight:700;">Disp (mm)</div>
<div class="a t" style="left:1194px;top:753px;font-size:13px;font-weight:700;transform:rotate(-90deg);transform-origin:0 0;line-height:16px">Load (N)</div>
<div class="a" style="left:0;top:1040px;width:1920px;height:40px;background:linear-gradient(90deg,#1e3440 0%,#22363f 45%,#20303f 65%,#1e2b45 80%,#1c2643 100%)"></div>
<svg class="a" style="left:16px;top:1052px" width="17" height="17"><path d="M0 2.3L7 1.3V8H0ZM8 1.1L17 0V8H8ZM0 9H7V15.7L0 14.7ZM8 9H17V17L8 15.9Z" fill="#fff"/></svg>
<div class="a" style="left:48px;top:1040px;width:288px;height:40px;background:#f0f0f0"></div>
<svg class="a" style="left:59px;top:1052px" width="18" height="18"><circle cx="11" cy="7" r="5.5" fill="none" stroke="#222" stroke-width="1.3"/><path d="M7 11L1.5 16.5" stroke="#222" stroke-width="1.5"/></svg>
<div class="a t" style="left:88px;top:1053px;font-size:14.6px;color:#333;font-weight:400;">Type here to search</div>
<svg class="a" style="left:260px;top:1040px" width="76" height="40"><path d="M2 40 Q8 26 22 22 Q34 20 46 28 L52 40Z" fill="#e4ddd2"/><path d="M10 34 Q22 26 36 30 M14 38 Q26 30 42 34 M30 26 Q38 24 46 30" stroke="#8aa0a8" stroke-width="1" fill="none"/><path d="M6 8 Q10 18 16 14 Q22 10 30 14 Q40 18 46 14" stroke="#f07a50" stroke-width="3.5" fill="none" stroke-linecap="round"/><path d="M26 18 Q36 22 44 18 Q54 14 58 20 Q62 28 70 30" stroke="#f28a5a" stroke-width="4" fill="none" stroke-linecap="round"/><path d="M48 22 Q52 32 60 40" stroke="#ef7a4a" stroke-width="3.5" fill="none"/><path d="M58 22 Q66 30 70 40" stroke="#e8604a" stroke-width="3" fill="none"/><ellipse cx="58" cy="11" rx="11" ry="9" fill="#f39060"/><ellipse cx="48" cy="16" rx="8" ry="5" fill="#f08050"/><circle cx="50" cy="7" r="1.8" fill="#333"/><circle cx="56" cy="12" r="1.8" fill="#333"/><path d="M42 30 Q48 34 46 38" stroke="#3a8a8a" stroke-width="2" fill="none"/></svg>
<svg class="a" style="left:352px;top:1052px" width="18" height="17"><path d="M1 1H13M1 16H13" stroke="#fff"/><rect x="1.5" y="3.5" width="11" height="10" fill="none" stroke="#fff"/><path d="M15.5 1V16" stroke="#fff"/><rect x="15" y="5" width="2" height="3" fill="#fff"/></svg>
<svg class="a" style="left:398px;top:1047px" width="25" height="25" viewBox="0 0 49 49"><defs><linearGradient id="eg2" x1="0" y1="0.3" x2="1" y2="0.5"><stop offset="0" stop-color="#2b9ee6"/><stop offset="0.5" stop-color="#33c2d8"/><stop offset="1" stop-color="#6fd64a"/></linearGradient><linearGradient id="ed2" x1="0" y1="0" x2="1" y2="1"><stop offset="0" stop-color="#1a7fd6"/><stop offset="1" stop-color="#0c4a9e"/></linearGradient></defs><path d="M24.5 1 A23.5 23.5 0 0 1 48 24 Q48 31 40 32 Q32 32 33 25 Q33 15 24 14 Q10 14 4 26 Q2 30 2 24 A23 23 0 0 1 24.5 1Z" fill="url(#eg2)"/><path d="M2 24 Q6 12 20 12 Q32 12 33 24 Q33 30 28 30 Q20 30 20 22 Q12 30 18 40 Q24 46 34 44 Q40 42 46 36 Q40 48 24 48 A23.5 23.5 0 0 1 2 24Z" fill="url(#ed2)"/><path d="M20 22 Q20 30 28 30 Q26 36 32 40 Q24 42 20 34 Q17 28 20 22Z" fill="#2aa2e6"/></svg>
<svg class="a" style="left:448px;top:1050px" width="23" height="20"><path d="M0 1H8L10 3H22V19H0Z" fill="#e8b53a"/><path d="M0 5H22V19H0Z" fill="#fbd66a"/><path d="M5 19V12H17V19H14V15H8V19Z" fill="#2a86d8"/></svg>
<svg class="a" style="left:496px;top:1048px" width="24" height="24"><path d="M7 5V2H17V5" stroke="#2a9ae8" stroke-width="2" fill="none"/><rect x="0.5" y="5" width="23" height="19" rx="3" fill="#f7f7f7"/><rect x="7" y="10" width="4.5" height="4.5" fill="#f25022"/><rect x="12.5" y="10" width="4.5" height="4.5" fill="#7fba00"/><rect x="7" y="15.5" width="4.5" height="4.5" fill="#00a4ef"/><rect x="12.5" y="15.5" width="4.5" height="4.5" fill="#ffb900"/></svg>
<div class="a" style="left:534px;top:1040px;width:48px;height:40px;background:#44545f"></div>
<svg class="a" style="left:546px;top:1050px" width="22" height="22"><rect x="1" y="1" width="20" height="20" fill="#e0e0e0"/><path d="M3 3L20 11L3 19Z" fill="#f3cf10"/><path d="M7 11H12M9.5 8.5V13.5" stroke="#556" stroke-width="1.3"/><text x="14" y="20" font-size="6" font-family="Liberation Sans" fill="#444">17</text></svg>
<svg class="a" style="left:594px;top:1048px" width="24" height="24" viewBox="0 0 46 46"><circle cx="23" cy="23" r="21.5" fill="#2a282b" stroke="#d8d8d8" stroke-width="2.2"/><g fill="#e0e0e0"><path d="M16 8 Q10 14 16 20 Q22 24 25 20 Q20 20 18 16 Q16 12 16 8Z"/><path d="M36 20 Q30 17 26 22 Q24 28 27 30 Q28 26 32 24 Q34 22 36 20Z"/><path d="M18 36 Q24 40 28 34 Q28 30 24 29 Q24 32 22 34 Q20 35 18 36Z"/></g></svg>
<svg class="a" style="left:643px;top:1048px" width="26" height="24"><ellipse cx="11" cy="14" rx="10" ry="8" fill="#cfe4f4"/><circle cx="6" cy="12" r="2" fill="#e33"/><circle cx="10" cy="9" r="2" fill="#3b3"/><circle cx="15" cy="9" r="2" fill="#fb0"/><path d="M25 1L14 20" stroke="#e6a24a" stroke-width="2.5"/></svg>
<div class="a" style="left:440px;top:1078px;width:40px;height:2px;background:#76b9ed"></div>
<div class="a" style="left:534px;top:1078px;width:48px;height:2px;background:#76b9ed"></div>
<div class="a" style="left:587px;top:1078px;width:40px;height:2px;background:#76b9ed"></div>
<div class="a" style="left:636px;top:1078px;width:40px;height:2px;background:#76b9ed"></div>
<svg class="a" style="left:1567px;top:1051px" width="22" height="17"><circle cx="7" cy="6" r="5" fill="#f5c518"/><path d="M4 16 Q0 16 1 12 Q2 9 6 10 Q8 5 13 6 Q18 6 18 10 Q22 11 21 14 Q20 16 17 16Z" fill="#d8eefc"/></svg>
<div class="a t" style="left:1596px;top:1053px;font-size:14.4px;color:#fff;font-weight:400;">73°F</div>
<div class="a t" style="left:1634px;top:1053px;font-size:14.2px;color:#fff;font-weight:400;">Mostly cloudy</div>
<svg class="a" style="left:1736px;top:1055px" width="14" height="9"><path d="M1 8L7 2L13 8" stroke="#fff" stroke-width="1.2" fill="none"/></svg>
<svg class="a" style="left:1758px;top:1052px" width="16" height="16"><path d="M1 5H4L8 1V15L4 11H1Z" fill="none" stroke="#fff" stroke-width="1.1"/><path d="M10 5L15 10M15 5L10 10" stroke="#fff" stroke-width="1.1"/></svg>
<svg class="a" style="left:1782px;top:1052px" width="18" height="16"><rect x="4.5" y="2.5" width="13" height="9" fill="none" stroke="#fff"/><path d="M11 12V15M7 15H15" stroke="#fff"/><rect x="0.5" y="0.5" width="5" height="4" fill="#1c2a42" stroke="#fff"/></svg>
<div class="a t" style="left:1685px;width:300px;text-align:center;top:1045px;font-size:11.6px;color:#fff;font-weight:400;">2:41 PM</div>
<div class="a t" style="left:1685px;width:300px;text-align:center;top:1062.5px;font-size:11.8px;color:#fff;font-weight:400;">2/8/2023</div>
<svg class="a" style="left:1878px;top:1052px" width="19" height="18"><path d="M1.5 1.5H17.5V13.5H11L8.5 16.5L6 13.5H1.5Z" fill="none" stroke="#fff" stroke-width="1.1"/></svg>
<div class="a" style="left:1916px;top:1040px;width:1px;height:40px;background:#5a6878"></div>
</body></html>
